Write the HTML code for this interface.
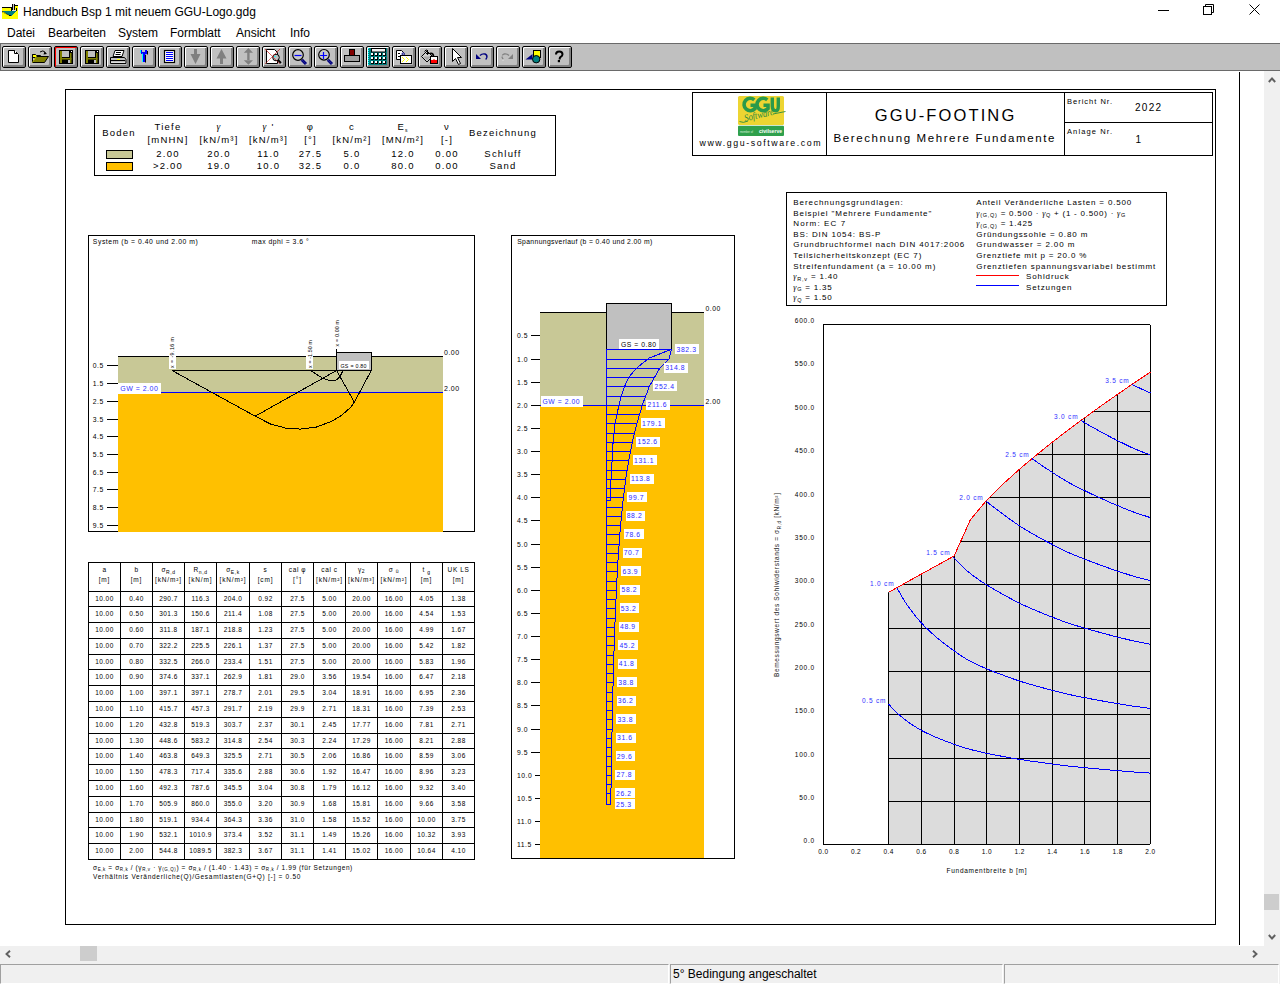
<!DOCTYPE html><html><head><meta charset="utf-8"><style>

*{margin:0;padding:0;box-sizing:border-box}
html,body{width:1280px;height:984px;overflow:hidden;background:#fff;font-family:"Liberation Sans", sans-serif;position:relative}
#title{position:absolute;left:0;top:0;width:1280px;height:22px;background:#fff;font-size:12px;color:#000}
#menu{position:absolute;left:0;top:22px;width:1280px;height:21px;background:#fff;font-size:12px;color:#000}
#menu span{top:4px!important}
#tb{position:absolute;left:0;top:43px;width:1280px;height:28px;background:#c0c0c0;border-top:1px solid #6a6a6a;border-bottom:1px solid #6a6a6a;border-left:1px solid #6a6a6a}
.btn{position:absolute;top:2px;width:24px;height:22px;border:1px solid #000;border-radius:2px;background:#c0c0c0;box-shadow:inset 1px 1px 0 #fff,inset -2px -2px 0 #808080}
.btn.red{box-shadow:inset 1px 1px 0 #ff0000,inset -2px -2px 0 #808080}
.btn svg{position:absolute;left:0;top:0}
#doc{position:absolute;left:0;top:0}
#vs{position:absolute;left:1264px;top:71px;width:16px;height:875px;background:#f0f0f0}
#hs{position:absolute;left:0;top:946px;width:1264px;height:18px;background:#f0f0f0}
#corner{position:absolute;left:1264px;top:946px;width:16px;height:18px;background:#f0f0f0}
#sb{position:absolute;left:0;top:964px;width:1280px;height:20px;background:#f0f0f0}
#sb .p{position:absolute;top:0;height:20px;border-top:1px solid #a0a0a0;border-left:1px solid #a0a0a0;border-right:1px solid #fff;border-bottom:1px solid #fff;font-size:12px;color:#000}
#sb .p span{position:absolute;left:2px;top:2px}

</style></head><body>
<div id="title"><svg style="position:absolute;left:2px;top:4px" width="17" height="16" viewBox="0 0 17 16" shape-rendering="crispEdges"><rect x="0" y="3" width="16" height="12" fill="#ffff00"/><rect x="13" y="1.5" width="3" height="2" fill="#ffff00"/><rect x="0" y="3" width="10" height="1" fill="#000"/><rect x="10" y="0" width="1" height="7" fill="#000"/><rect x="11" y="0" width="1" height="6" fill="#c8c8c8"/><rect x="12" y="0" width="1" height="6" fill="#000"/><rect x="13" y="1" width="3" height="1" fill="#000"/><rect x="9" y="3.5" width="1" height="3" fill="#000"/><rect x="14" y="3.5" width="1" height="3" fill="#000"/><rect x="10" y="5.5" width="4" height="1.5" fill="#e0e0e0"/><path d="M0 7h14.5l-4 4.5h-2.5z" fill="#008080"/><path d="M0 7.5l7.5 4" stroke="#000" stroke-width="0.9" stroke-dasharray="1.2 0.8" shape-rendering="auto"/><rect x="7" y="11" width="2" height="1" fill="#000"/></svg><span style="position:absolute;left:23px;top:5px">Handbuch Bsp 1 mit neuem GGU-Logo.gdg</span><svg style="position:absolute;left:1158px;top:10px" width="11" height="2"><rect width="11" height="1" fill="#000"/></svg><svg style="position:absolute;left:1203px;top:4px" width="12" height="12" viewBox="0 0 12 12"><rect x="0.5" y="2.5" width="8" height="8" fill="none" stroke="#000"/><path d="M2.5 2.5v-2h8v8h-2" fill="none" stroke="#000"/></svg><svg style="position:absolute;left:1249px;top:4px" width="12" height="12" viewBox="0 0 12 12"><path d="M0.5 0.5l10 10M10.5 0.5l-10 10" stroke="#000"/></svg></div>
<div id="menu"><span style="position:absolute;left:7px;top:25px">Datei</span><span style="position:absolute;left:48px;top:25px">Bearbeiten</span><span style="position:absolute;left:118px;top:25px">System</span><span style="position:absolute;left:170px;top:25px">Formblatt</span><span style="position:absolute;left:236px;top:25px">Ansicht</span><span style="position:absolute;left:290px;top:25px">Info</span></div>
<div id="tb"><div class="btn" style="left:1px"><svg width="22" height="20" viewBox="0 0 22 20"><path d="M5.5 3.5h6l4 4v8h-10z" fill="#fff" stroke="#000"/><path d="M11.5 3.5v3h3" fill="none" stroke="#000"/><rect x="12" y="4" width="1" height="1" fill="#fff"/></svg></div><div class="btn" style="left:27px"><svg width="22" height="20" viewBox="0 0 22 20"><path d="M3.5 7.5h3l1 1h4v2h-8z" fill="#ffff00" stroke="#000"/><path d="M3.5 15.5v-8M3.5 15.5h12l4-6h-12l-4 6z" fill="#808000" stroke="#000"/><path d="M3.5 15.5l4-6" stroke="#ffff00" stroke-width="0.8"/><path d="M11 5q3-2.5 5.5 0.5" fill="none" stroke="#000"/><path d="M15.5 4.5l2.5 2.5l-3.5 0.5z" fill="#000"/></svg></div><div class="btn red" style="left:53px"><svg width="22" height="20" viewBox="0 0 22 20"><rect x="4" y="3" width="14" height="14" fill="#000"/><rect x="5" y="4" width="2" height="12" fill="#808000"/><rect x="15" y="6" width="1.5" height="10" fill="#808000"/><rect x="5" y="11" width="11.5" height="1.5" fill="#808000"/><rect x="7" y="4" width="7" height="6" fill="#c0c0c0"/><rect x="13" y="13" width="2" height="3" fill="#c0c0c0"/><rect x="16" y="4" width="1" height="1" fill="#fff"/></svg></div><div class="btn" style="left:79px"><svg width="22" height="20" viewBox="0 0 22 20"><rect x="4" y="3" width="14" height="14" fill="#000"/><rect x="5" y="4" width="2" height="12" fill="#808000"/><rect x="15" y="6" width="1.5" height="10" fill="#808000"/><rect x="5" y="11" width="11.5" height="1.5" fill="#808000"/><rect x="7" y="4" width="7" height="6" fill="#c0c0c0"/><rect x="13" y="13" width="2" height="3" fill="#c0c0c0"/><rect x="16" y="4" width="1" height="1" fill="#fff"/></svg></div><div class="btn" style="left:105px"><svg width="22" height="20" viewBox="0 0 22 20"><path d="M8 3.5h9l-2 6h-9z" fill="#fff" stroke="#000"/><path d="M9 5.5h5M8.5 7.5h5" stroke="#000"/><path d="M3.5 10.5h14l1.5 2v4h-15.5z" fill="#c0c0c0" stroke="#000"/><path d="M4 13.5h14" stroke="#000"/><path d="M10 12.5h3" stroke="#ffff00"/><path d="M4 15.5h14" stroke="#e0e0e0"/></svg></div><div class="btn" style="left:131px"><svg width="22" height="20" viewBox="0 0 22 20"><path d="M7 3h2v2h3v-2h2v4h-1.5v8h-2.5v-8h-2v-1.5h-1z" fill="#0000ff"/><path d="M7.5 3v3M9.5 6.5v8.5" stroke="#00ffff"/><path d="M14.5 4v3.5M12.5 8v7.5" stroke="#000"/></svg></div><div class="btn" style="left:157px"><svg width="22" height="20" viewBox="0 0 22 20"><rect x="5.5" y="3.5" width="10" height="12" fill="#fff" stroke="#000" stroke-width="1.2"/><path d="M7 5.5h7M7 7.5h7M7 9.5h7M7 11.5h7M7 13.5h7" stroke="#0000ff"/></svg></div><div class="btn" style="left:183px"><svg width="22" height="20" viewBox="0 0 22 20"><path d="M9 2h3v5h3.5l-5 10l-5-10h3.5z" fill="#808080"/></svg></div><div class="btn" style="left:209px"><svg width="22" height="20" viewBox="0 0 22 20"><path d="M9 17h3v-5.5h3.5l-5-9.5l-5 9.5h3.5z" fill="#808080"/></svg></div><div class="btn" style="left:235px"><svg width="22" height="20" viewBox="0 0 22 20"><path d="M10.2 5.5h2.4v8h-2.4z M6.8 5.7l4.6-4.6l4.6 4.6z M6.8 13.3l4.6 4.4l4.6-4.4z" fill="#808080"/></svg></div><div class="btn" style="left:261px"><svg width="22" height="20" viewBox="0 0 22 20"><path d="M3.5 2.5h8l3 3v11h-11z" fill="#fff" stroke="#000"/><circle cx="13" cy="10.5" r="3.3" fill="#c0c0c0" stroke="#000"/><path d="M11.5 9l1 1" stroke="#00ffff" stroke-width="1.3"/><path d="M15 13l3 3" stroke="#000" stroke-width="1.8"/><path d="M2 2l15 15M17 2l-15 15" stroke="#c00000" stroke-width="0.9" stroke-dasharray="1 0.5"/></svg></div><div class="btn" style="left:287px"><svg width="22" height="20" viewBox="0 0 22 20"><circle cx="9" cy="8" r="5.3" fill="#c8c8c8" stroke="#000" stroke-width="1.2"/><path d="M5.5 8.5h7" stroke="#0000ff" stroke-width="1.2"/><path d="M12.8 12.8l4.2 4.2" stroke="#000080" stroke-width="3"/><path d="M13.5 13.5l3 3" stroke="#8080c0" stroke-width="0.6" stroke-dasharray="0.8 0.8"/></svg></div><div class="btn" style="left:313px"><svg width="22" height="20" viewBox="0 0 22 20"><circle cx="9" cy="7.8" r="5.3" fill="#c8c8c8" stroke="#000" stroke-width="1.2"/><path d="M5.1 8.5h7M8.5 4.9v7" stroke="#0000ff" stroke-width="1.2"/><path d="M12.8 12.8l4.2 4.2" stroke="#000080" stroke-width="3"/><path d="M13.5 13.5l3 3" stroke="#8080c0" stroke-width="0.6" stroke-dasharray="0.8 0.8"/></svg></div><div class="btn" style="left:339px"><svg width="22" height="20" viewBox="0 0 22 20"><rect x="8.5" y="2.5" width="5" height="6" fill="#800000" stroke="#000"/><rect x="3.5" y="8.5" width="15" height="6" fill="#a0a0a0" stroke="#000"/></svg></div><div class="btn" style="left:365px"><svg width="22" height="20" viewBox="0 0 22 20"><rect x="1" y="1" width="19" height="17" fill="#008080"/><rect x="4.5" y="1.5" width="14" height="3.5" fill="#f0f0f0" stroke="#000"/><path d="M1.5 1v17" stroke="#00ffff" stroke-dasharray="1 1"/><rect x="4" y="6" width="3" height="3" fill="#000"/><rect x="4" y="6" width="2" height="2" fill="#fff"/><rect x="4" y="10" width="3" height="3" fill="#000"/><rect x="4" y="10" width="2" height="2" fill="#fff"/><rect x="4" y="14" width="3" height="3" fill="#000"/><rect x="4" y="14" width="2" height="2" fill="#fff"/><rect x="8" y="6" width="3" height="3" fill="#000"/><rect x="8" y="6" width="2" height="2" fill="#fff"/><rect x="8" y="10" width="3" height="3" fill="#000"/><rect x="8" y="10" width="2" height="2" fill="#fff"/><rect x="8" y="14" width="3" height="3" fill="#000"/><rect x="8" y="14" width="2" height="2" fill="#fff"/><rect x="12" y="6" width="3" height="3" fill="#000"/><rect x="12" y="6" width="2" height="2" fill="#fff"/><rect x="12" y="10" width="3" height="3" fill="#000"/><rect x="12" y="10" width="2" height="2" fill="#fff"/><rect x="12" y="14" width="3" height="3" fill="#000"/><rect x="12" y="14" width="2" height="2" fill="#fff"/><rect x="16" y="6" width="3" height="3" fill="#000"/><rect x="16" y="6" width="2" height="2" fill="#fff"/><rect x="16" y="10" width="3" height="3" fill="#000"/><rect x="16" y="10" width="2" height="2" fill="#fff"/><rect x="16" y="14" width="3" height="3" fill="#000"/><rect x="16" y="14" width="2" height="2" fill="#fff"/></svg></div><div class="btn" style="left:391px"><svg width="22" height="20" viewBox="0 0 22 20"><path d="M3.5 3.5h5l2 2v7h-7z" fill="#fff" stroke="#000"/><path d="M5 6.5h2M5 9.5h2" stroke="#000"/><circle cx="10.2" cy="7" r="1.2" fill="#fff" stroke="#000080"/><rect x="7.5" y="8.5" width="11" height="8" fill="#fff" stroke="#000"/><path d="M9 10l2.5 2.5l-2.5 2.5M13 10l2.5 2.5l-2.5 2.5" stroke="#ffff00" fill="none"/></svg></div><div class="btn" style="left:417px"><svg width="22" height="20" viewBox="0 0 22 20"><path d="M2.5 9.5l5.5-5.5l5.5 5.5l-5.5 5.5z" fill="#d0d0d0" stroke="#000"/><path d="M4 9.5l4 4l4-4z" fill="#a8a8a8"/><path d="M5.5 4.5q1.5-3 3.5-0.5" fill="none" stroke="#000"/><path d="M8.5 3v4.5M7 6l1.5 1.5l1.5-1.5" stroke="#000" fill="none"/><path d="M11 6.5q3.5-1 3.5 3.5v4" stroke="#000" stroke-width="1.8" fill="none"/><rect x="11.5" y="9.5" width="7" height="7" fill="#fff" stroke="#000"/><path d="M12 13h2l1-1l1 1h2v3h-6z" fill="#ff0000"/></svg></div><div class="btn" style="left:443px"><svg width="22" height="20" viewBox="0 0 22 20"><path d="M7.5 1.5v13l3-3l3 6l2-1l-3-6h4z" fill="#fff" stroke="#000"/></svg></div><div class="btn" style="left:469px"><svg width="22" height="20" viewBox="0 0 22 20"><path d="M9 8.5q2-2 5-1.5q2.5 1 1.8 3.5l-1 2" fill="none" stroke="#000080" stroke-width="1.4"/><path d="M5 7v5h5z" fill="#000080"/></svg></div><div class="btn" style="left:495px"><svg width="22" height="20" viewBox="0 0 22 20"><path d="M12 8.5q-2-2-5-1.5q-2.5 1-1.8 3.5l1 2" fill="none" stroke="#808080" stroke-width="1.3"/><path d="M16 7v5h-5z" fill="#808080"/><path d="M5 8.5v1M6 12.5v1" stroke="#fff"/></svg></div><div class="btn" style="left:521px"><svg width="22" height="20" viewBox="0 0 22 20"><rect x="10.5" y="3.5" width="7" height="7" fill="#ffff00" stroke="#000"/><path d="M2.5 12.5l7-5.5v5.5z" fill="#000080"/><circle cx="13.2" cy="12.2" r="3.7" fill="#008080" stroke="#000"/></svg></div><div class="btn" style="left:547px"><svg width="22" height="20" viewBox="0 0 22 20"><path d="M7 7.5q0-3 3.2-3q3.3 0 3.3 2.8q0 1.6-1.8 2.5q-1 0.6-1 1.8v0.8" fill="none" stroke="#000" stroke-width="2"/><rect x="8.8" y="13" width="2.2" height="2.2" fill="#000"/></svg></div></div>
<div id="vs"><svg style="position:absolute;left:4px;top:6px" width="8" height="6" viewBox="0 0 8 6"><path d="M0.8 5l3.2-3.5l3.2 3.5" stroke="#606060" stroke-width="1.9" fill="none"/></svg><div style="position:absolute;left:0;top:823px;width:15px;height:16px;background:#cdcdcd"></div><svg style="position:absolute;left:4px;top:863px" width="8" height="6" viewBox="0 0 8 6"><path d="M0.8 1l3.2 3.5l3.2-3.5" stroke="#606060" stroke-width="1.9" fill="none"/></svg></div>
<div id="hs"><svg style="position:absolute;left:5px;top:4px" width="6" height="8" viewBox="0 0 6 8"><path d="M5 0.8l-3.5 3.2l3.5 3.2" stroke="#606060" stroke-width="1.9" fill="none"/></svg><div style="position:absolute;left:80px;top:0;width:17px;height:15px;background:#cdcdcd"></div><svg style="position:absolute;left:1252px;top:4px" width="6" height="8" viewBox="0 0 6 8"><path d="M1 0.8l3.5 3.2l-3.5 3.2" stroke="#606060" stroke-width="1.9" fill="none"/></svg></div>
<div id="corner"></div>
<div id="sb"><div class="p" style="left:0;width:669px"></div><div class="p" style="left:670px;width:333px"><span>5° Bedingung angeschaltet</span></div><div class="p" style="left:1004px;width:275px"></div></div>
<svg id="doc" width="1280" height="984" viewBox="0 0 1280 984" shape-rendering="crispEdges" style="position:absolute;left:0;top:0;font-family:&quot;Liberation Sans&quot;, sans-serif">
<rect x="65.5" y="89.5" width="1150" height="835" fill="none" stroke="#000" stroke-width="1" />
<line x1="1239.5" y1="72" x2="1239.5" y2="945" stroke="#000" stroke-width="1"/>
<rect x="94.5" y="115.5" width="461" height="60" fill="none" stroke="#000" stroke-width="1" />
<text x="119" y="136" font-size="9.5" fill="#000" text-anchor="middle" letter-spacing="1.2">Boden</text>
<text x="168" y="130" font-size="9.5" fill="#000" text-anchor="middle" letter-spacing="1.2">Tiefe</text>
<text x="168" y="143" font-size="9.5" fill="#000" text-anchor="middle" letter-spacing="1.2">[mNHN]</text>
<text x="168" y="156.5" font-size="9.5" fill="#000" text-anchor="middle" letter-spacing="1.2">2.00</text>
<text x="168" y="168.5" font-size="9.5" fill="#000" text-anchor="middle" letter-spacing="1.2">&gt;2.00</text>
<text x="219" y="130" font-size="9.5" fill="#000" text-anchor="middle" letter-spacing="1.2"><tspan font-family="Liberation Serif" font-style="italic">γ</tspan></text>
<text x="219" y="143" font-size="9.5" fill="#000" text-anchor="middle" letter-spacing="1.2">[kN/m³]</text>
<text x="219" y="156.5" font-size="9.5" fill="#000" text-anchor="middle" letter-spacing="1.2">20.0</text>
<text x="219" y="168.5" font-size="9.5" fill="#000" text-anchor="middle" letter-spacing="1.2">19.0</text>
<text x="268.5" y="130" font-size="9.5" fill="#000" text-anchor="middle" letter-spacing="1.2"><tspan font-family="Liberation Serif" font-style="italic">γ</tspan> '</text>
<text x="268.5" y="143" font-size="9.5" fill="#000" text-anchor="middle" letter-spacing="1.2">[kN/m³]</text>
<text x="268.5" y="156.5" font-size="9.5" fill="#000" text-anchor="middle" letter-spacing="1.2">11.0</text>
<text x="268.5" y="168.5" font-size="9.5" fill="#000" text-anchor="middle" letter-spacing="1.2">10.0</text>
<text x="310.5" y="130" font-size="9.5" fill="#000" text-anchor="middle" letter-spacing="1.2">φ</text>
<text x="310.5" y="143" font-size="9.5" fill="#000" text-anchor="middle" letter-spacing="1.2">[°]</text>
<text x="310.5" y="156.5" font-size="9.5" fill="#000" text-anchor="middle" letter-spacing="1.2">27.5</text>
<text x="310.5" y="168.5" font-size="9.5" fill="#000" text-anchor="middle" letter-spacing="1.2">32.5</text>
<text x="352" y="130" font-size="9.5" fill="#000" text-anchor="middle" letter-spacing="1.2">c</text>
<text x="352" y="143" font-size="9.5" fill="#000" text-anchor="middle" letter-spacing="1.2">[kN/m²]</text>
<text x="352" y="156.5" font-size="9.5" fill="#000" text-anchor="middle" letter-spacing="1.2">5.0</text>
<text x="352" y="168.5" font-size="9.5" fill="#000" text-anchor="middle" letter-spacing="1.2">0.0</text>
<text x="403" y="130" font-size="9.5" fill="#000" text-anchor="middle" letter-spacing="1.2">E<tspan font-size="5" dy="1.5">s</tspan></text>
<text x="403" y="143" font-size="9.5" fill="#000" text-anchor="middle" letter-spacing="1.2">[MN/m²]</text>
<text x="403" y="156.5" font-size="9.5" fill="#000" text-anchor="middle" letter-spacing="1.2">12.0</text>
<text x="403" y="168.5" font-size="9.5" fill="#000" text-anchor="middle" letter-spacing="1.2">80.0</text>
<text x="447" y="130" font-size="9.5" fill="#000" text-anchor="middle" letter-spacing="1.2">ν</text>
<text x="447" y="143" font-size="9.5" fill="#000" text-anchor="middle" letter-spacing="1.2">[-]</text>
<text x="447" y="156.5" font-size="9.5" fill="#000" text-anchor="middle" letter-spacing="1.2">0.00</text>
<text x="447" y="168.5" font-size="9.5" fill="#000" text-anchor="middle" letter-spacing="1.2">0.00</text>
<text x="503" y="136" font-size="9.5" fill="#000" text-anchor="middle" letter-spacing="1.2">Bezeichnung</text>
<text x="503" y="156.5" font-size="9.5" fill="#000" text-anchor="middle" letter-spacing="1.2">Schluff</text>
<text x="503" y="168.5" font-size="9.5" fill="#000" text-anchor="middle" letter-spacing="1.2">Sand</text>
<rect x="106.5" y="150.5" width="26" height="8" fill="#C8C896" stroke="#000" stroke-width="1" />
<rect x="106.5" y="162.5" width="26" height="8" fill="#FFC000" stroke="#000" stroke-width="1" />
<rect x="692.5" y="92.5" width="520" height="63" fill="none" stroke="#000" stroke-width="1" />
<line x1="826.5" y1="92.5" x2="826.5" y2="155.5" stroke="#000" stroke-width="1"/>
<line x1="1064.5" y1="92.5" x2="1064.5" y2="155.5" stroke="#000" stroke-width="1"/>
<line x1="1064.5" y1="122.5" x2="1212.5" y2="122.5" stroke="#000" stroke-width="1"/>
<text x="944.5" y="120.7" font-size="16.5" fill="#000" text-anchor="middle" textLength="139.5" lengthAdjust="spacing">GGU-FOOTING</text>
<text x="944" y="141.8" font-size="11.5" fill="#000" text-anchor="middle" textLength="221" lengthAdjust="spacing">Berechnung Mehrere Fundamente</text>
<text x="1067" y="104" font-size="7.5" fill="#000" textLength="45" lengthAdjust="spacing">Bericht Nr.</text>
<text x="1135" y="111.2" font-size="10" fill="#000" textLength="26" lengthAdjust="spacing">2022</text>
<text x="1067" y="134" font-size="7.5" fill="#000" textLength="45" lengthAdjust="spacing">Anlage Nr.</text>
<text x="1135.5" y="143" font-size="10" fill="#000">1</text>
<text x="760" y="146" font-size="8.8" fill="#000" text-anchor="middle" textLength="121" lengthAdjust="spacing">www.ggu-software.com</text>
<g shape-rendering="auto">
<rect x="738" y="96" width="46" height="29" rx="1.5" fill="#EDD532"/>
<rect x="738" y="125.7" width="46" height="10.3" rx="1" fill="#2FA04C"/>
<path d="M754.3 99.8 A6.2 6.2 0 1 0 755 108.5 L755 105.2 L750.5 105.2" fill="none" stroke="#2A9A4A" stroke-width="3.6"/>
<path d="M767.3 99.8 A6.2 6.2 0 1 0 768 108.5 L768 105.2 L763.5 105.2" fill="none" stroke="#2A9A4A" stroke-width="3.6"/>
<path d="M772.3 97.5 V106 Q772.3 110.8 776 110.8 Q778.3 110.8 778.3 106 V97.5" fill="none" stroke="#2A9A4A" stroke-width="3.4"/>
<text transform="translate(745,121.5) rotate(-13)" font-family="Liberation Serif" font-style="italic" font-size="10" fill="#2A8A40" textLength="30" lengthAdjust="spacingAndGlyphs">Software</text>
<path d="M739.5 121.5 Q743 123.5 748 121" fill="none" stroke="#2A8A40" stroke-width="0.9"/>
<path d="M773 114 L785.5 111.5" fill="none" stroke="#2A8A40" stroke-width="0.9"/>
<text x="740" y="132.5" font-size="4.2" fill="#d8f0d8" textLength="13" lengthAdjust="spacingAndGlyphs">member of</text>
<text x="759" y="132.8" font-size="5.2" font-weight="bold" fill="#fff" textLength="23" lengthAdjust="spacingAndGlyphs">civilserve</text>
</g>
<rect x="786.5" y="192.5" width="380" height="113" fill="none" stroke="#000" stroke-width="1" />
<text x="793.3" y="205" font-size="8" fill="#000" textLength="109.4" lengthAdjust="spacing">Berechnungsgrundlagen:</text>
<text x="793.3" y="215.8" font-size="8" fill="#000" textLength="138" lengthAdjust="spacing">Beispiel "Mehrere Fundamente"</text>
<text x="793.3" y="226.2" font-size="8" fill="#000" textLength="52" lengthAdjust="spacing">Norm:  EC 7</text>
<text x="793.3" y="236.8" font-size="8" fill="#000" textLength="87" lengthAdjust="spacing">BS: DIN 1054: BS-P</text>
<text x="793.3" y="247.3" font-size="8" fill="#000" textLength="171" lengthAdjust="spacing">Grundbruchformel nach DIN 4017:2006</text>
<text x="793.3" y="257.9" font-size="8" fill="#000" textLength="128" lengthAdjust="spacing">Teilsicherheitskonzept (EC 7)</text>
<text x="793.3" y="268.5" font-size="8" fill="#000" textLength="142" lengthAdjust="spacing">Streifenfundament (a = 10.00 m)</text>
<text x="793.3" y="279" font-size="8" fill="#000" letter-spacing="0.8"><tspan font-family="Liberation Serif" font-style="italic">γ</tspan><tspan font-size="5.5" dy="1.5">R,v</tspan><tspan dy="-1.5"> = 1.40</tspan></text>
<text x="793.3" y="289.6" font-size="8" fill="#000" letter-spacing="0.8"><tspan font-family="Liberation Serif" font-style="italic">γ</tspan><tspan font-size="5.5" dy="1.5">G</tspan><tspan dy="-1.5"> = 1.35</tspan></text>
<text x="793.3" y="300.1" font-size="8" fill="#000" letter-spacing="0.8"><tspan font-family="Liberation Serif" font-style="italic">γ</tspan><tspan font-size="5.5" dy="1.5">Q</tspan><tspan dy="-1.5"> = 1.50</tspan></text>
<text x="976.3" y="205" font-size="8" fill="#000" textLength="155" lengthAdjust="spacing">Anteil Veränderliche Lasten = 0.500</text>
<text x="976.3" y="236.8" font-size="8" fill="#000" textLength="111" lengthAdjust="spacing">Gründungssohle = 0.80 m</text>
<text x="976.3" y="247.3" font-size="8" fill="#000" textLength="98" lengthAdjust="spacing">Grundwasser = 2.00 m</text>
<text x="976.3" y="257.9" font-size="8" fill="#000" textLength="110" lengthAdjust="spacing">Grenztiefe mit p = 20.0 %</text>
<text x="976.3" y="268.5" font-size="8" fill="#000" textLength="179" lengthAdjust="spacing">Grenztiefen spannungsvariabel bestimmt</text>
<text x="976.3" y="215.8" font-size="8" fill="#000" letter-spacing="0.75"><tspan font-family="Liberation Serif" font-style="italic">γ</tspan><tspan font-size="5.5" dy="1.5">(G,Q)</tspan><tspan dy="-1.5"> = 0.500 · </tspan><tspan font-family="Liberation Serif" font-style="italic">γ</tspan><tspan font-size="5.5" dy="1.5">Q</tspan><tspan dy="-1.5"> + (1 - 0.500) · </tspan><tspan font-family="Liberation Serif" font-style="italic">γ</tspan><tspan font-size="5.5" dy="1.5">G</tspan></text>
<text x="976.3" y="226.2" font-size="8" fill="#000" letter-spacing="0.75"><tspan font-family="Liberation Serif" font-style="italic">γ</tspan><tspan font-size="5.5" dy="1.5">(G,Q)</tspan><tspan dy="-1.5"> = 1.425</tspan></text>
<line x1="976" y1="275.5" x2="1019" y2="275.5" stroke="#FF0000" stroke-width="1"/>
<line x1="976" y1="285.5" x2="1019" y2="285.5" stroke="#0000FF" stroke-width="1"/>
<text x="1026" y="279" font-size="8" fill="#000" letter-spacing="0.9">Sohldruck</text>
<text x="1026" y="289.6" font-size="8" fill="#000" letter-spacing="0.9">Setzungen</text>
<rect x="88.5" y="235.5" width="386" height="296" fill="none" stroke="#000" stroke-width="1" />
<rect x="118" y="356.5" width="325" height="36" fill="#C8C896"/>
<rect x="118" y="392.5" width="325" height="139" fill="#FFC000"/>
<line x1="118" y1="356.5" x2="443" y2="356.5" stroke="#000" stroke-width="1"/>
<line x1="118" y1="392.5" x2="443" y2="392.5" stroke="#0000FF" stroke-width="1"/>
<text x="92.8" y="243.9" font-size="6.8" fill="#000" textLength="105" lengthAdjust="spacing">System (b = 0.40 und 2.00 m)</text>
<text x="251.7" y="243.9" font-size="6.8" fill="#000" textLength="57" lengthAdjust="spacing">max dphi = 3.6 °</text>
<text x="444" y="354.5" font-size="7" fill="#000" letter-spacing="0.5">0.00</text>
<text x="444" y="390.5" font-size="7" fill="#000" letter-spacing="0.5">2.00</text>
<line x1="107" y1="365.5" x2="117.5" y2="365.5" stroke="#000" stroke-width="1"/>
<text x="92.8" y="367.8" font-size="6.8" fill="#000" letter-spacing="0.5">0.5</text>
<line x1="107" y1="383.5" x2="117.5" y2="383.5" stroke="#000" stroke-width="1"/>
<text x="92.8" y="385.8" font-size="6.8" fill="#000" letter-spacing="0.5">1.5</text>
<line x1="107" y1="401.5" x2="117.5" y2="401.5" stroke="#000" stroke-width="1"/>
<text x="92.8" y="403.8" font-size="6.8" fill="#000" letter-spacing="0.5">2.5</text>
<line x1="107" y1="419.5" x2="117.5" y2="419.5" stroke="#000" stroke-width="1"/>
<text x="92.8" y="421.8" font-size="6.8" fill="#000" letter-spacing="0.5">3.5</text>
<line x1="107" y1="436.5" x2="117.5" y2="436.5" stroke="#000" stroke-width="1"/>
<text x="92.8" y="438.8" font-size="6.8" fill="#000" letter-spacing="0.5">4.5</text>
<line x1="107" y1="454.5" x2="117.5" y2="454.5" stroke="#000" stroke-width="1"/>
<text x="92.8" y="456.8" font-size="6.8" fill="#000" letter-spacing="0.5">5.5</text>
<line x1="107" y1="472.5" x2="117.5" y2="472.5" stroke="#000" stroke-width="1"/>
<text x="92.8" y="474.8" font-size="6.8" fill="#000" letter-spacing="0.5">6.5</text>
<line x1="107" y1="489.5" x2="117.5" y2="489.5" stroke="#000" stroke-width="1"/>
<text x="92.8" y="491.8" font-size="6.8" fill="#000" letter-spacing="0.5">7.5</text>
<line x1="107" y1="507.5" x2="117.5" y2="507.5" stroke="#000" stroke-width="1"/>
<text x="92.8" y="509.8" font-size="6.8" fill="#000" letter-spacing="0.5">8.5</text>
<line x1="107" y1="525.5" x2="117.5" y2="525.5" stroke="#000" stroke-width="1"/>
<text x="92.8" y="527.8" font-size="6.8" fill="#000" letter-spacing="0.5">9.5</text>
<rect x="118" y="383" width="43" height="10.5" fill="#fff"/>
<text x="120.3" y="391" font-size="7" fill="#3030ff" textLength="37.5" lengthAdjust="spacing">GW = 2.00</text>
<rect x="336.5" y="352.5" width="35" height="18" fill="#C0C0C0" stroke="#000" stroke-width="1"/>
<rect x="339" y="361" width="30" height="8" fill="#fff"/>
<text x="340.5" y="367.8" font-size="5.3" fill="#000" textLength="26" lengthAdjust="spacing">GS = 0.80</text>
<line x1="336.5" y1="349" x2="336.5" y2="352.5" stroke="#000" stroke-width="1"/>
<line x1="172" y1="370.5" x2="336.5" y2="370.5" stroke="#000" stroke-width="1"/>
<rect x="168.8" y="336" width="7.2" height="33" fill="#fff"/>
<text transform="translate(174.4,368) rotate(-90)" font-size="5.3" fill="#000" textLength="31" lengthAdjust="spacing">x = -9.16 m</text>
<rect x="306.0" y="339" width="7.2" height="30" fill="#fff"/>
<text transform="translate(311.6,368) rotate(-90)" font-size="5.3" fill="#000" textLength="28" lengthAdjust="spacing">x = -1.50 m</text>
<text transform="translate(338.6,346.5) rotate(-90)" font-size="5.3" fill="#000" textLength="26.5" lengthAdjust="spacing">x = 0.00 m</text>
<polyline points="172.0,370.5 255.2,416.2" fill="none" stroke="#000" stroke-width="1"/>
<polyline points="255.2,416.2 336.6,370.5" fill="none" stroke="#000" stroke-width="1"/>
<polyline points="255.2,416.2 270.5,424.0 285.7,428.1 299.9,429.1 316.2,427.1 331.4,421.5 341.6,415.4 350.7,407.3 354.3,402.2" fill="none" stroke="#000" stroke-width="1"/>
<polyline points="336.6,370.5 354.3,402.2 371.3,370.5" fill="none" stroke="#000" stroke-width="1"/>
<polyline points="310.7,370.5 322.8,378.4 329.9,380.6 335.6,380.6 339.8,377.0 343.0,370.5" fill="none" stroke="#000" stroke-width="1"/>
<rect x="511.5" y="235.5" width="223" height="623" fill="none" stroke="#000" stroke-width="1" />
<rect x="540" y="312" width="164" height="93" fill="#C8C896"/>
<rect x="540" y="405" width="164" height="453" fill="#FFC000"/>
<line x1="540" y1="312.5" x2="606.5" y2="312.5" stroke="#000" stroke-width="1"/>
<line x1="671.5" y1="312.5" x2="704" y2="312.5" stroke="#000" stroke-width="1"/>
<text x="517.2" y="244" font-size="6.8" fill="#000" textLength="135" lengthAdjust="spacing">Spannungsverlauf (b = 0.40 und 2.00 m)</text>
<text x="705.6" y="310.8" font-size="6.8" fill="#000" letter-spacing="0.5">0.00</text>
<text x="705.6" y="404" font-size="6.8" fill="#000" letter-spacing="0.5">2.00</text>
<line x1="530.5" y1="335.5" x2="540" y2="335.5" stroke="#000" stroke-width="1"/>
<text x="517" y="338.0" font-size="6.8" fill="#000" letter-spacing="0.5">0.5</text>
<line x1="530.5" y1="359.5" x2="540" y2="359.5" stroke="#000" stroke-width="1"/>
<text x="517" y="362.0" font-size="6.8" fill="#000" letter-spacing="0.5">1.0</text>
<line x1="530.5" y1="382.5" x2="540" y2="382.5" stroke="#000" stroke-width="1"/>
<text x="517" y="385.0" font-size="6.8" fill="#000" letter-spacing="0.5">1.5</text>
<line x1="530.5" y1="405.5" x2="540" y2="405.5" stroke="#000" stroke-width="1"/>
<text x="517" y="408.0" font-size="6.8" fill="#000" letter-spacing="0.5">2.0</text>
<line x1="530.5" y1="428.5" x2="540" y2="428.5" stroke="#000" stroke-width="1"/>
<text x="517" y="431.0" font-size="6.8" fill="#000" letter-spacing="0.5">2.5</text>
<line x1="530.5" y1="451.5" x2="540" y2="451.5" stroke="#000" stroke-width="1"/>
<text x="517" y="454.0" font-size="6.8" fill="#000" letter-spacing="0.5">3.0</text>
<line x1="530.5" y1="474.5" x2="540" y2="474.5" stroke="#000" stroke-width="1"/>
<text x="517" y="477.0" font-size="6.8" fill="#000" letter-spacing="0.5">3.5</text>
<line x1="530.5" y1="497.5" x2="540" y2="497.5" stroke="#000" stroke-width="1"/>
<text x="517" y="500.0" font-size="6.8" fill="#000" letter-spacing="0.5">4.0</text>
<line x1="530.5" y1="520.5" x2="540" y2="520.5" stroke="#000" stroke-width="1"/>
<text x="517" y="523.0" font-size="6.8" fill="#000" letter-spacing="0.5">4.5</text>
<line x1="530.5" y1="544.5" x2="540" y2="544.5" stroke="#000" stroke-width="1"/>
<text x="517" y="547.0" font-size="6.8" fill="#000" letter-spacing="0.5">5.0</text>
<line x1="530.5" y1="567.5" x2="540" y2="567.5" stroke="#000" stroke-width="1"/>
<text x="517" y="570.0" font-size="6.8" fill="#000" letter-spacing="0.5">5.5</text>
<line x1="530.5" y1="590.5" x2="540" y2="590.5" stroke="#000" stroke-width="1"/>
<text x="517" y="593.0" font-size="6.8" fill="#000" letter-spacing="0.5">6.0</text>
<line x1="530.5" y1="613.5" x2="540" y2="613.5" stroke="#000" stroke-width="1"/>
<text x="517" y="616.0" font-size="6.8" fill="#000" letter-spacing="0.5">6.5</text>
<line x1="530.5" y1="636.5" x2="540" y2="636.5" stroke="#000" stroke-width="1"/>
<text x="517" y="639.0" font-size="6.8" fill="#000" letter-spacing="0.5">7.0</text>
<line x1="530.5" y1="659.5" x2="540" y2="659.5" stroke="#000" stroke-width="1"/>
<text x="517" y="662.0" font-size="6.8" fill="#000" letter-spacing="0.5">7.5</text>
<line x1="530.5" y1="682.5" x2="540" y2="682.5" stroke="#000" stroke-width="1"/>
<text x="517" y="685.0" font-size="6.8" fill="#000" letter-spacing="0.5">8.0</text>
<line x1="530.5" y1="705.5" x2="540" y2="705.5" stroke="#000" stroke-width="1"/>
<text x="517" y="708.0" font-size="6.8" fill="#000" letter-spacing="0.5">8.5</text>
<line x1="530.5" y1="729.5" x2="540" y2="729.5" stroke="#000" stroke-width="1"/>
<text x="517" y="732.0" font-size="6.8" fill="#000" letter-spacing="0.5">9.0</text>
<line x1="530.5" y1="752.5" x2="540" y2="752.5" stroke="#000" stroke-width="1"/>
<text x="517" y="755.0" font-size="6.8" fill="#000" letter-spacing="0.5">9.5</text>
<line x1="535" y1="775.5" x2="540" y2="775.5" stroke="#000" stroke-width="1"/>
<text x="517" y="778.0" font-size="6.8" fill="#000" letter-spacing="0.5">10.0</text>
<line x1="535" y1="798.5" x2="540" y2="798.5" stroke="#000" stroke-width="1"/>
<text x="517" y="801.0" font-size="6.8" fill="#000" letter-spacing="0.5">10.5</text>
<line x1="535" y1="821.5" x2="540" y2="821.5" stroke="#000" stroke-width="1"/>
<text x="517" y="824.0" font-size="6.8" fill="#000" letter-spacing="0.5">11.0</text>
<line x1="535" y1="844.5" x2="540" y2="844.5" stroke="#000" stroke-width="1"/>
<text x="517" y="847.0" font-size="6.8" fill="#000" letter-spacing="0.5">11.5</text>
<rect x="606.5" y="303.5" width="65" height="45.5" fill="#C0C0C0" stroke="#000" stroke-width="1"/>
<rect x="619" y="338.7" width="40" height="10" fill="#fff"/>
<text x="621" y="346.8" font-size="6.8" fill="#000" textLength="35" lengthAdjust="spacing">GS = 0.80</text>
<line x1="540" y1="405.5" x2="704" y2="405.5" stroke="#0000FF" stroke-width="1"/>
<rect x="540.5" y="396" width="42" height="10.5" fill="#fff"/>
<text x="542.5" y="403.5" font-size="6.8" fill="#3030ff" textLength="37" lengthAdjust="spacing">GW = 2.00</text>
<line x1="606.5" y1="349.5" x2="671.41454" y2="349.5" stroke="#0000FF" stroke-width="1"/>
<line x1="606.5" y1="359.5" x2="669.1562" y2="359.5" stroke="#0000FF" stroke-width="1"/>
<line x1="606.5" y1="368.5" x2="659.95304" y2="368.5" stroke="#0000FF" stroke-width="1"/>
<line x1="606.5" y1="377.5" x2="654.65528" y2="377.5" stroke="#0000FF" stroke-width="1"/>
<line x1="606.5" y1="386.5" x2="649.35752" y2="386.5" stroke="#0000FF" stroke-width="1"/>
<line x1="606.5" y1="396.5" x2="645.8936" y2="396.5" stroke="#0000FF" stroke-width="1"/>
<line x1="606.5" y1="405.5" x2="642.42968" y2="405.5" stroke="#0000FF" stroke-width="1"/>
<line x1="606.5" y1="414.5" x2="639.67043" y2="414.5" stroke="#0000FF" stroke-width="1"/>
<line x1="606.5" y1="423.5" x2="636.9111800000001" y2="423.5" stroke="#0000FF" stroke-width="1"/>
<line x1="606.5" y1="433.5" x2="634.66133" y2="433.5" stroke="#0000FF" stroke-width="1"/>
<line x1="606.5" y1="442.5" x2="632.41148" y2="442.5" stroke="#0000FF" stroke-width="1"/>
<line x1="606.5" y1="451.5" x2="630.58613" y2="451.5" stroke="#0000FF" stroke-width="1"/>
<line x1="606.5" y1="460.5" x2="628.76078" y2="460.5" stroke="#0000FF" stroke-width="1"/>
<line x1="606.5" y1="470.5" x2="627.29201" y2="470.5" stroke="#0000FF" stroke-width="1"/>
<line x1="606.5" y1="479.5" x2="625.82324" y2="479.5" stroke="#0000FF" stroke-width="1"/>
<line x1="606.5" y1="488.5" x2="624.62615" y2="488.5" stroke="#0000FF" stroke-width="1"/>
<line x1="606.5" y1="497.5" x2="623.42906" y2="497.5" stroke="#0000FF" stroke-width="1"/>
<line x1="606.5" y1="507.5" x2="622.45271" y2="507.5" stroke="#0000FF" stroke-width="1"/>
<line x1="606.5" y1="516.5" x2="621.47636" y2="516.5" stroke="#0000FF" stroke-width="1"/>
<line x1="606.5" y1="525.5" x2="620.66132" y2="525.5" stroke="#0000FF" stroke-width="1"/>
<line x1="606.5" y1="534.5" x2="619.84628" y2="534.5" stroke="#0000FF" stroke-width="1"/>
<line x1="606.5" y1="544.5" x2="619.17557" y2="544.5" stroke="#0000FF" stroke-width="1"/>
<line x1="606.5" y1="553.5" x2="618.50486" y2="553.5" stroke="#0000FF" stroke-width="1"/>
<line x1="606.5" y1="562.5" x2="617.92754" y2="562.5" stroke="#0000FF" stroke-width="1"/>
<line x1="606.5" y1="571.5" x2="617.35022" y2="571.5" stroke="#0000FF" stroke-width="1"/>
<line x1="606.5" y1="581.5" x2="616.86629" y2="581.5" stroke="#0000FF" stroke-width="1"/>
<line x1="606.5" y1="590.5" x2="616.38236" y2="590.5" stroke="#0000FF" stroke-width="1"/>
<line x1="606.5" y1="599.5" x2="615.95786" y2="599.5" stroke="#0000FF" stroke-width="1"/>
<line x1="606.5" y1="608.5" x2="615.53336" y2="608.5" stroke="#0000FF" stroke-width="1"/>
<line x1="606.5" y1="618.5" x2="615.16829" y2="618.5" stroke="#0000FF" stroke-width="1"/>
<line x1="606.5" y1="627.5" x2="614.80322" y2="627.5" stroke="#0000FF" stroke-width="1"/>
<line x1="606.5" y1="636.5" x2="614.48909" y2="636.5" stroke="#0000FF" stroke-width="1"/>
<line x1="606.5" y1="645.5" x2="614.17496" y2="645.5" stroke="#0000FF" stroke-width="1"/>
<line x1="606.5" y1="655.5" x2="613.8863" y2="655.5" stroke="#0000FF" stroke-width="1"/>
<line x1="606.5" y1="664.5" x2="613.59764" y2="664.5" stroke="#0000FF" stroke-width="1"/>
<line x1="606.5" y1="673.5" x2="613.34294" y2="673.5" stroke="#0000FF" stroke-width="1"/>
<line x1="606.5" y1="682.5" x2="613.08824" y2="682.5" stroke="#0000FF" stroke-width="1"/>
<line x1="606.5" y1="692.5" x2="612.8675" y2="692.5" stroke="#0000FF" stroke-width="1"/>
<line x1="606.5" y1="701.5" x2="612.64676" y2="701.5" stroke="#0000FF" stroke-width="1"/>
<line x1="606.5" y1="710.5" x2="612.443" y2="710.5" stroke="#0000FF" stroke-width="1"/>
<line x1="606.5" y1="719.5" x2="612.23924" y2="719.5" stroke="#0000FF" stroke-width="1"/>
<line x1="606.5" y1="729.5" x2="612.05246" y2="729.5" stroke="#0000FF" stroke-width="1"/>
<line x1="606.5" y1="738.5" x2="611.86568" y2="738.5" stroke="#0000FF" stroke-width="1"/>
<line x1="606.5" y1="747.5" x2="611.69588" y2="747.5" stroke="#0000FF" stroke-width="1"/>
<line x1="606.5" y1="756.5" x2="611.52608" y2="756.5" stroke="#0000FF" stroke-width="1"/>
<line x1="606.5" y1="766.5" x2="611.37326" y2="766.5" stroke="#0000FF" stroke-width="1"/>
<line x1="606.5" y1="775.5" x2="611.22044" y2="775.5" stroke="#0000FF" stroke-width="1"/>
<line x1="606.5" y1="784.5" x2="611.0846" y2="784.5" stroke="#0000FF" stroke-width="1"/>
<line x1="606.5" y1="793.5" x2="610.94876" y2="793.5" stroke="#0000FF" stroke-width="1"/>
<line x1="606.5" y1="804.5" x2="610.79594" y2="804.5" stroke="#0000FF" stroke-width="1"/>
<polyline points="671.4,349.3 669.2,358.6 660.0,367.8 654.7,377.1 649.4,386.3 645.9,395.6 642.4,404.8 639.7,414.1 636.9,423.3 634.7,432.6 632.4,441.8 630.6,451.1 628.8,460.3 627.3,469.6 625.8,478.8 624.6,488.1 623.4,497.3 622.5,506.6 621.5,515.8 620.7,525.1 619.8,534.3 619.2,543.5 618.5,552.8 617.9,562.1 617.4,571.3 616.9,580.6 616.4,589.8 616.0,599.0 615.5,608.3 615.2,617.5 614.8,626.8 614.5,636.0 614.2,645.3 613.9,654.5 613.6,663.8 613.3,673.1 613.1,682.3 612.9,691.5 612.6,700.8 612.4,710.0 612.2,719.3 612.1,728.5 611.9,737.8 611.7,747.0 611.5,756.3 611.4,765.6 611.2,774.8 611.1,784.1 610.9,793.3 610.8,804.4" fill="none" stroke="#0000FF" stroke-width="1"/>
<line x1="606.5" y1="349.3" x2="606.5" y2="804.5" stroke="#0000FF" stroke-width="1"/>
<line x1="606.5" y1="349.5" x2="671.5" y2="349.5" stroke="#0000FF" stroke-width="1"/>
<polyline points="671.4,349.3 648.7,358.3 636.4,368.3 628.5,377.5 624.6,386.4 621.3,396.3 619.0,405.4 616.8,414.6 615.1,423.3 614.0,433.4 613.1,442.3 612.4,451.4 612.1,460.6 611.4,470.6 611.0,479.1 610.3,488.4 610.3,497.3 610.3,500.0 606.5,500.0" fill="none" stroke="#0000FF" stroke-width="1"/>
<rect x="675.4" y="344.3" width="24.0" height="10" fill="#fff"/>
<text x="676.6" y="351.8" font-size="6.8" fill="#2a2aff" letter-spacing="0.6">382.3</text>
<rect x="664.0" y="362.8" width="24.0" height="10" fill="#fff"/>
<text x="665.2" y="370.3" font-size="6.8" fill="#2a2aff" letter-spacing="0.6">314.8</text>
<rect x="653.4" y="381.3" width="24.0" height="10" fill="#fff"/>
<text x="654.6" y="388.8" font-size="6.8" fill="#2a2aff" letter-spacing="0.6">252.4</text>
<rect x="646.4" y="399.8" width="24.0" height="10" fill="#fff"/>
<text x="647.6" y="407.3" font-size="6.8" fill="#2a2aff" letter-spacing="0.6">211.6</text>
<rect x="640.9" y="418.3" width="24.0" height="10" fill="#fff"/>
<text x="642.1" y="425.8" font-size="6.8" fill="#2a2aff" letter-spacing="0.6">179.1</text>
<rect x="636.4" y="436.8" width="24.0" height="10" fill="#fff"/>
<text x="637.6" y="444.3" font-size="6.8" fill="#2a2aff" letter-spacing="0.6">152.6</text>
<rect x="632.8" y="455.3" width="24.0" height="10" fill="#fff"/>
<text x="634.0" y="462.8" font-size="6.8" fill="#2a2aff" letter-spacing="0.6">131.1</text>
<rect x="629.8" y="473.8" width="24.0" height="10" fill="#fff"/>
<text x="631.0" y="481.3" font-size="6.8" fill="#2a2aff" letter-spacing="0.6">113.8</text>
<rect x="627.4" y="492.3" width="19.8" height="10" fill="#fff"/>
<text x="628.6" y="499.8" font-size="6.8" fill="#2a2aff" letter-spacing="0.6">99.7</text>
<rect x="625.5" y="510.8" width="19.8" height="10" fill="#fff"/>
<text x="626.7" y="518.3" font-size="6.8" fill="#2a2aff" letter-spacing="0.6">88.2</text>
<rect x="623.8" y="529.3" width="19.8" height="10" fill="#fff"/>
<text x="625.0" y="536.8" font-size="6.8" fill="#2a2aff" letter-spacing="0.6">78.6</text>
<rect x="622.5" y="547.8" width="19.8" height="10" fill="#fff"/>
<text x="623.7" y="555.3" font-size="6.8" fill="#2a2aff" letter-spacing="0.6">70.7</text>
<rect x="621.4" y="566.3" width="19.8" height="10" fill="#fff"/>
<text x="622.6" y="573.8" font-size="6.8" fill="#2a2aff" letter-spacing="0.6">63.9</text>
<rect x="620.4" y="584.8" width="19.8" height="10" fill="#fff"/>
<text x="621.6" y="592.3" font-size="6.8" fill="#2a2aff" letter-spacing="0.6">58.2</text>
<rect x="619.5" y="603.3" width="19.8" height="10" fill="#fff"/>
<text x="620.7" y="610.8" font-size="6.8" fill="#2a2aff" letter-spacing="0.6">53.2</text>
<rect x="618.8" y="621.8" width="19.8" height="10" fill="#fff"/>
<text x="620.0" y="629.3" font-size="6.8" fill="#2a2aff" letter-spacing="0.6">48.9</text>
<rect x="618.2" y="640.3" width="19.8" height="10" fill="#fff"/>
<text x="619.4" y="647.8" font-size="6.8" fill="#2a2aff" letter-spacing="0.6">45.2</text>
<rect x="617.6" y="658.8" width="19.8" height="10" fill="#fff"/>
<text x="618.8" y="666.3" font-size="6.8" fill="#2a2aff" letter-spacing="0.6">41.8</text>
<rect x="617.1" y="677.3" width="19.8" height="10" fill="#fff"/>
<text x="618.3" y="684.8" font-size="6.8" fill="#2a2aff" letter-spacing="0.6">38.8</text>
<rect x="616.6" y="695.8" width="19.8" height="10" fill="#fff"/>
<text x="617.8" y="703.3" font-size="6.8" fill="#2a2aff" letter-spacing="0.6">36.2</text>
<rect x="616.2" y="714.3" width="19.8" height="10" fill="#fff"/>
<text x="617.4" y="721.8" font-size="6.8" fill="#2a2aff" letter-spacing="0.6">33.8</text>
<rect x="615.9" y="732.8" width="19.8" height="10" fill="#fff"/>
<text x="617.1" y="740.3" font-size="6.8" fill="#2a2aff" letter-spacing="0.6">31.6</text>
<rect x="615.5" y="751.3" width="19.8" height="10" fill="#fff"/>
<text x="616.7" y="758.8" font-size="6.8" fill="#2a2aff" letter-spacing="0.6">29.6</text>
<rect x="615.2" y="769.8" width="19.8" height="10" fill="#fff"/>
<text x="616.4" y="777.3" font-size="6.8" fill="#2a2aff" letter-spacing="0.6">27.8</text>
<rect x="614.9" y="788.3" width="19.8" height="10" fill="#fff"/>
<text x="616.1" y="795.8" font-size="6.8" fill="#2a2aff" letter-spacing="0.6">26.2</text>
<rect x="614.8" y="799.4" width="19.8" height="10" fill="#fff"/>
<text x="616.0" y="806.9" font-size="6.8" fill="#2a2aff" letter-spacing="0.6">25.3</text>
<rect x="88.5" y="562.5" width="386" height="296.5" fill="#fff" stroke="#000" stroke-width="1"/>
<line x1="120.5" y1="562.5" x2="120.5" y2="859.5" stroke="#000" stroke-width="1"/>
<line x1="152.5" y1="562.5" x2="152.5" y2="859.5" stroke="#000" stroke-width="1"/>
<line x1="184.5" y1="562.5" x2="184.5" y2="859.5" stroke="#000" stroke-width="1"/>
<line x1="216.5" y1="562.5" x2="216.5" y2="859.5" stroke="#000" stroke-width="1"/>
<line x1="249.5" y1="562.5" x2="249.5" y2="859.5" stroke="#000" stroke-width="1"/>
<line x1="281.5" y1="562.5" x2="281.5" y2="859.5" stroke="#000" stroke-width="1"/>
<line x1="313.5" y1="562.5" x2="313.5" y2="859.5" stroke="#000" stroke-width="1"/>
<line x1="345.5" y1="562.5" x2="345.5" y2="859.5" stroke="#000" stroke-width="1"/>
<line x1="377.5" y1="562.5" x2="377.5" y2="859.5" stroke="#000" stroke-width="1"/>
<line x1="410.5" y1="562.5" x2="410.5" y2="859.5" stroke="#000" stroke-width="1"/>
<line x1="442.5" y1="562.5" x2="442.5" y2="859.5" stroke="#000" stroke-width="1"/>
<line x1="88.5" y1="591.5" x2="474.5" y2="591.5" stroke="#000" stroke-width="1"/>
<line x1="88.5" y1="606.5" x2="474.5" y2="606.5" stroke="#000" stroke-width="1"/>
<line x1="88.5" y1="622.5" x2="474.5" y2="622.5" stroke="#000" stroke-width="1"/>
<line x1="88.5" y1="638.5" x2="474.5" y2="638.5" stroke="#000" stroke-width="1"/>
<line x1="88.5" y1="654.5" x2="474.5" y2="654.5" stroke="#000" stroke-width="1"/>
<line x1="88.5" y1="669.5" x2="474.5" y2="669.5" stroke="#000" stroke-width="1"/>
<line x1="88.5" y1="685.5" x2="474.5" y2="685.5" stroke="#000" stroke-width="1"/>
<line x1="88.5" y1="701.5" x2="474.5" y2="701.5" stroke="#000" stroke-width="1"/>
<line x1="88.5" y1="717.5" x2="474.5" y2="717.5" stroke="#000" stroke-width="1"/>
<line x1="88.5" y1="733.5" x2="474.5" y2="733.5" stroke="#000" stroke-width="1"/>
<line x1="88.5" y1="748.5" x2="474.5" y2="748.5" stroke="#000" stroke-width="1"/>
<line x1="88.5" y1="764.5" x2="474.5" y2="764.5" stroke="#000" stroke-width="1"/>
<line x1="88.5" y1="780.5" x2="474.5" y2="780.5" stroke="#000" stroke-width="1"/>
<line x1="88.5" y1="796.5" x2="474.5" y2="796.5" stroke="#000" stroke-width="1"/>
<line x1="88.5" y1="812.5" x2="474.5" y2="812.5" stroke="#000" stroke-width="1"/>
<line x1="88.5" y1="827.5" x2="474.5" y2="827.5" stroke="#000" stroke-width="1"/>
<line x1="88.5" y1="843.5" x2="474.5" y2="843.5" stroke="#000" stroke-width="1"/>
<line x1="88.5" y1="859.5" x2="474.5" y2="859.5" stroke="#000" stroke-width="1"/>
<text x="104.5" y="572" font-size="6.5" fill="#000" text-anchor="middle" letter-spacing="0.6">a</text>
<text x="104.5" y="582" font-size="6.5" fill="#000" text-anchor="middle" letter-spacing="0.85">[m]</text>
<text x="136.5" y="572" font-size="6.5" fill="#000" text-anchor="middle" letter-spacing="0.6">b</text>
<text x="136.5" y="582" font-size="6.5" fill="#000" text-anchor="middle" letter-spacing="0.85">[m]</text>
<text x="168.5" y="572" font-size="6.5" fill="#000" text-anchor="middle" letter-spacing="0.6">σ<tspan font-size="5" dy="1.5">R,d</tspan></text>
<text x="168.5" y="582" font-size="6.5" fill="#000" text-anchor="middle" letter-spacing="0.85">[kN/m²]</text>
<text x="200.5" y="572" font-size="6.5" fill="#000" text-anchor="middle" letter-spacing="0.6">R<tspan font-size="5" dy="1.5">n,d</tspan></text>
<text x="200.5" y="582" font-size="6.5" fill="#000" text-anchor="middle" letter-spacing="0.85">[kN/m]</text>
<text x="233.0" y="572" font-size="6.5" fill="#000" text-anchor="middle" letter-spacing="0.6">σ<tspan font-size="5" dy="1.5">E,k</tspan></text>
<text x="233.0" y="582" font-size="6.5" fill="#000" text-anchor="middle" letter-spacing="0.85">[kN/m²]</text>
<text x="265.5" y="572" font-size="6.5" fill="#000" text-anchor="middle" letter-spacing="0.6">s</text>
<text x="265.5" y="582" font-size="6.5" fill="#000" text-anchor="middle" letter-spacing="0.85">[cm]</text>
<text x="297.5" y="572" font-size="6.5" fill="#000" text-anchor="middle" letter-spacing="0.6">cal φ</text>
<text x="297.5" y="582" font-size="6.5" fill="#000" text-anchor="middle" letter-spacing="0.85">[°]</text>
<text x="329.5" y="572" font-size="6.5" fill="#000" text-anchor="middle" letter-spacing="0.6">cal c</text>
<text x="329.5" y="582" font-size="6.5" fill="#000" text-anchor="middle" letter-spacing="0.85">[kN/m²]</text>
<text x="361.5" y="572" font-size="6.5" fill="#000" text-anchor="middle" letter-spacing="0.6">γ<tspan font-size="5" dy="1">2</tspan></text>
<text x="361.5" y="582" font-size="6.5" fill="#000" text-anchor="middle" letter-spacing="0.85">[kN/m³]</text>
<text x="394.0" y="572" font-size="6.5" fill="#000" text-anchor="middle" letter-spacing="0.6">σ <tspan font-size="5" dy="1">ü</tspan></text>
<text x="394.0" y="582" font-size="6.5" fill="#000" text-anchor="middle" letter-spacing="0.85">[kN/m²]</text>
<text x="426.5" y="572" font-size="6.5" fill="#000" text-anchor="middle" letter-spacing="0.6">t <tspan font-size="5" dy="1.5">g</tspan></text>
<text x="426.5" y="582" font-size="6.5" fill="#000" text-anchor="middle" letter-spacing="0.85">[m]</text>
<text x="458.5" y="572" font-size="6.5" fill="#000" text-anchor="middle" letter-spacing="0.6">UK LS</text>
<text x="458.5" y="582" font-size="6.5" fill="#000" text-anchor="middle" letter-spacing="0.85">[m]</text>
<text x="104.5" y="601" font-size="6.5" fill="#000" text-anchor="middle" letter-spacing="0.45">10.00</text>
<text x="136.5" y="601" font-size="6.5" fill="#000" text-anchor="middle" letter-spacing="0.45">0.40</text>
<text x="168.5" y="601" font-size="6.5" fill="#000" text-anchor="middle" letter-spacing="0.45">290.7</text>
<text x="200.5" y="601" font-size="6.5" fill="#000" text-anchor="middle" letter-spacing="0.45">116.3</text>
<text x="233.0" y="601" font-size="6.5" fill="#000" text-anchor="middle" letter-spacing="0.45">204.0</text>
<text x="265.5" y="601" font-size="6.5" fill="#000" text-anchor="middle" letter-spacing="0.45">0.92</text>
<text x="297.5" y="601" font-size="6.5" fill="#000" text-anchor="middle" letter-spacing="0.45">27.5</text>
<text x="329.5" y="601" font-size="6.5" fill="#000" text-anchor="middle" letter-spacing="0.45">5.00</text>
<text x="361.5" y="601" font-size="6.5" fill="#000" text-anchor="middle" letter-spacing="0.45">20.00</text>
<text x="394.0" y="601" font-size="6.5" fill="#000" text-anchor="middle" letter-spacing="0.45">16.00</text>
<text x="426.5" y="601" font-size="6.5" fill="#000" text-anchor="middle" letter-spacing="0.45">4.05</text>
<text x="458.5" y="601" font-size="6.5" fill="#000" text-anchor="middle" letter-spacing="0.45">1.38</text>
<text x="104.5" y="616" font-size="6.5" fill="#000" text-anchor="middle" letter-spacing="0.45">10.00</text>
<text x="136.5" y="616" font-size="6.5" fill="#000" text-anchor="middle" letter-spacing="0.45">0.50</text>
<text x="168.5" y="616" font-size="6.5" fill="#000" text-anchor="middle" letter-spacing="0.45">301.3</text>
<text x="200.5" y="616" font-size="6.5" fill="#000" text-anchor="middle" letter-spacing="0.45">150.6</text>
<text x="233.0" y="616" font-size="6.5" fill="#000" text-anchor="middle" letter-spacing="0.45">211.4</text>
<text x="265.5" y="616" font-size="6.5" fill="#000" text-anchor="middle" letter-spacing="0.45">1.08</text>
<text x="297.5" y="616" font-size="6.5" fill="#000" text-anchor="middle" letter-spacing="0.45">27.5</text>
<text x="329.5" y="616" font-size="6.5" fill="#000" text-anchor="middle" letter-spacing="0.45">5.00</text>
<text x="361.5" y="616" font-size="6.5" fill="#000" text-anchor="middle" letter-spacing="0.45">20.00</text>
<text x="394.0" y="616" font-size="6.5" fill="#000" text-anchor="middle" letter-spacing="0.45">16.00</text>
<text x="426.5" y="616" font-size="6.5" fill="#000" text-anchor="middle" letter-spacing="0.45">4.54</text>
<text x="458.5" y="616" font-size="6.5" fill="#000" text-anchor="middle" letter-spacing="0.45">1.53</text>
<text x="104.5" y="632" font-size="6.5" fill="#000" text-anchor="middle" letter-spacing="0.45">10.00</text>
<text x="136.5" y="632" font-size="6.5" fill="#000" text-anchor="middle" letter-spacing="0.45">0.60</text>
<text x="168.5" y="632" font-size="6.5" fill="#000" text-anchor="middle" letter-spacing="0.45">311.8</text>
<text x="200.5" y="632" font-size="6.5" fill="#000" text-anchor="middle" letter-spacing="0.45">187.1</text>
<text x="233.0" y="632" font-size="6.5" fill="#000" text-anchor="middle" letter-spacing="0.45">218.8</text>
<text x="265.5" y="632" font-size="6.5" fill="#000" text-anchor="middle" letter-spacing="0.45">1.23</text>
<text x="297.5" y="632" font-size="6.5" fill="#000" text-anchor="middle" letter-spacing="0.45">27.5</text>
<text x="329.5" y="632" font-size="6.5" fill="#000" text-anchor="middle" letter-spacing="0.45">5.00</text>
<text x="361.5" y="632" font-size="6.5" fill="#000" text-anchor="middle" letter-spacing="0.45">20.00</text>
<text x="394.0" y="632" font-size="6.5" fill="#000" text-anchor="middle" letter-spacing="0.45">16.00</text>
<text x="426.5" y="632" font-size="6.5" fill="#000" text-anchor="middle" letter-spacing="0.45">4.99</text>
<text x="458.5" y="632" font-size="6.5" fill="#000" text-anchor="middle" letter-spacing="0.45">1.67</text>
<text x="104.5" y="648" font-size="6.5" fill="#000" text-anchor="middle" letter-spacing="0.45">10.00</text>
<text x="136.5" y="648" font-size="6.5" fill="#000" text-anchor="middle" letter-spacing="0.45">0.70</text>
<text x="168.5" y="648" font-size="6.5" fill="#000" text-anchor="middle" letter-spacing="0.45">322.2</text>
<text x="200.5" y="648" font-size="6.5" fill="#000" text-anchor="middle" letter-spacing="0.45">225.5</text>
<text x="233.0" y="648" font-size="6.5" fill="#000" text-anchor="middle" letter-spacing="0.45">226.1</text>
<text x="265.5" y="648" font-size="6.5" fill="#000" text-anchor="middle" letter-spacing="0.45">1.37</text>
<text x="297.5" y="648" font-size="6.5" fill="#000" text-anchor="middle" letter-spacing="0.45">27.5</text>
<text x="329.5" y="648" font-size="6.5" fill="#000" text-anchor="middle" letter-spacing="0.45">5.00</text>
<text x="361.5" y="648" font-size="6.5" fill="#000" text-anchor="middle" letter-spacing="0.45">20.00</text>
<text x="394.0" y="648" font-size="6.5" fill="#000" text-anchor="middle" letter-spacing="0.45">16.00</text>
<text x="426.5" y="648" font-size="6.5" fill="#000" text-anchor="middle" letter-spacing="0.45">5.42</text>
<text x="458.5" y="648" font-size="6.5" fill="#000" text-anchor="middle" letter-spacing="0.45">1.82</text>
<text x="104.5" y="664" font-size="6.5" fill="#000" text-anchor="middle" letter-spacing="0.45">10.00</text>
<text x="136.5" y="664" font-size="6.5" fill="#000" text-anchor="middle" letter-spacing="0.45">0.80</text>
<text x="168.5" y="664" font-size="6.5" fill="#000" text-anchor="middle" letter-spacing="0.45">332.5</text>
<text x="200.5" y="664" font-size="6.5" fill="#000" text-anchor="middle" letter-spacing="0.45">266.0</text>
<text x="233.0" y="664" font-size="6.5" fill="#000" text-anchor="middle" letter-spacing="0.45">233.4</text>
<text x="265.5" y="664" font-size="6.5" fill="#000" text-anchor="middle" letter-spacing="0.45">1.51</text>
<text x="297.5" y="664" font-size="6.5" fill="#000" text-anchor="middle" letter-spacing="0.45">27.5</text>
<text x="329.5" y="664" font-size="6.5" fill="#000" text-anchor="middle" letter-spacing="0.45">5.00</text>
<text x="361.5" y="664" font-size="6.5" fill="#000" text-anchor="middle" letter-spacing="0.45">20.00</text>
<text x="394.0" y="664" font-size="6.5" fill="#000" text-anchor="middle" letter-spacing="0.45">16.00</text>
<text x="426.5" y="664" font-size="6.5" fill="#000" text-anchor="middle" letter-spacing="0.45">5.83</text>
<text x="458.5" y="664" font-size="6.5" fill="#000" text-anchor="middle" letter-spacing="0.45">1.96</text>
<text x="104.5" y="679" font-size="6.5" fill="#000" text-anchor="middle" letter-spacing="0.45">10.00</text>
<text x="136.5" y="679" font-size="6.5" fill="#000" text-anchor="middle" letter-spacing="0.45">0.90</text>
<text x="168.5" y="679" font-size="6.5" fill="#000" text-anchor="middle" letter-spacing="0.45">374.6</text>
<text x="200.5" y="679" font-size="6.5" fill="#000" text-anchor="middle" letter-spacing="0.45">337.1</text>
<text x="233.0" y="679" font-size="6.5" fill="#000" text-anchor="middle" letter-spacing="0.45">262.9</text>
<text x="265.5" y="679" font-size="6.5" fill="#000" text-anchor="middle" letter-spacing="0.45">1.81</text>
<text x="297.5" y="679" font-size="6.5" fill="#000" text-anchor="middle" letter-spacing="0.45">29.0</text>
<text x="329.5" y="679" font-size="6.5" fill="#000" text-anchor="middle" letter-spacing="0.45">3.56</text>
<text x="361.5" y="679" font-size="6.5" fill="#000" text-anchor="middle" letter-spacing="0.45">19.54</text>
<text x="394.0" y="679" font-size="6.5" fill="#000" text-anchor="middle" letter-spacing="0.45">16.00</text>
<text x="426.5" y="679" font-size="6.5" fill="#000" text-anchor="middle" letter-spacing="0.45">6.47</text>
<text x="458.5" y="679" font-size="6.5" fill="#000" text-anchor="middle" letter-spacing="0.45">2.18</text>
<text x="104.5" y="695" font-size="6.5" fill="#000" text-anchor="middle" letter-spacing="0.45">10.00</text>
<text x="136.5" y="695" font-size="6.5" fill="#000" text-anchor="middle" letter-spacing="0.45">1.00</text>
<text x="168.5" y="695" font-size="6.5" fill="#000" text-anchor="middle" letter-spacing="0.45">397.1</text>
<text x="200.5" y="695" font-size="6.5" fill="#000" text-anchor="middle" letter-spacing="0.45">397.1</text>
<text x="233.0" y="695" font-size="6.5" fill="#000" text-anchor="middle" letter-spacing="0.45">278.7</text>
<text x="265.5" y="695" font-size="6.5" fill="#000" text-anchor="middle" letter-spacing="0.45">2.01</text>
<text x="297.5" y="695" font-size="6.5" fill="#000" text-anchor="middle" letter-spacing="0.45">29.5</text>
<text x="329.5" y="695" font-size="6.5" fill="#000" text-anchor="middle" letter-spacing="0.45">3.04</text>
<text x="361.5" y="695" font-size="6.5" fill="#000" text-anchor="middle" letter-spacing="0.45">18.91</text>
<text x="394.0" y="695" font-size="6.5" fill="#000" text-anchor="middle" letter-spacing="0.45">16.00</text>
<text x="426.5" y="695" font-size="6.5" fill="#000" text-anchor="middle" letter-spacing="0.45">6.95</text>
<text x="458.5" y="695" font-size="6.5" fill="#000" text-anchor="middle" letter-spacing="0.45">2.36</text>
<text x="104.5" y="711" font-size="6.5" fill="#000" text-anchor="middle" letter-spacing="0.45">10.00</text>
<text x="136.5" y="711" font-size="6.5" fill="#000" text-anchor="middle" letter-spacing="0.45">1.10</text>
<text x="168.5" y="711" font-size="6.5" fill="#000" text-anchor="middle" letter-spacing="0.45">415.7</text>
<text x="200.5" y="711" font-size="6.5" fill="#000" text-anchor="middle" letter-spacing="0.45">457.3</text>
<text x="233.0" y="711" font-size="6.5" fill="#000" text-anchor="middle" letter-spacing="0.45">291.7</text>
<text x="265.5" y="711" font-size="6.5" fill="#000" text-anchor="middle" letter-spacing="0.45">2.19</text>
<text x="297.5" y="711" font-size="6.5" fill="#000" text-anchor="middle" letter-spacing="0.45">29.9</text>
<text x="329.5" y="711" font-size="6.5" fill="#000" text-anchor="middle" letter-spacing="0.45">2.71</text>
<text x="361.5" y="711" font-size="6.5" fill="#000" text-anchor="middle" letter-spacing="0.45">18.31</text>
<text x="394.0" y="711" font-size="6.5" fill="#000" text-anchor="middle" letter-spacing="0.45">16.00</text>
<text x="426.5" y="711" font-size="6.5" fill="#000" text-anchor="middle" letter-spacing="0.45">7.39</text>
<text x="458.5" y="711" font-size="6.5" fill="#000" text-anchor="middle" letter-spacing="0.45">2.53</text>
<text x="104.5" y="727" font-size="6.5" fill="#000" text-anchor="middle" letter-spacing="0.45">10.00</text>
<text x="136.5" y="727" font-size="6.5" fill="#000" text-anchor="middle" letter-spacing="0.45">1.20</text>
<text x="168.5" y="727" font-size="6.5" fill="#000" text-anchor="middle" letter-spacing="0.45">432.8</text>
<text x="200.5" y="727" font-size="6.5" fill="#000" text-anchor="middle" letter-spacing="0.45">519.3</text>
<text x="233.0" y="727" font-size="6.5" fill="#000" text-anchor="middle" letter-spacing="0.45">303.7</text>
<text x="265.5" y="727" font-size="6.5" fill="#000" text-anchor="middle" letter-spacing="0.45">2.37</text>
<text x="297.5" y="727" font-size="6.5" fill="#000" text-anchor="middle" letter-spacing="0.45">30.1</text>
<text x="329.5" y="727" font-size="6.5" fill="#000" text-anchor="middle" letter-spacing="0.45">2.45</text>
<text x="361.5" y="727" font-size="6.5" fill="#000" text-anchor="middle" letter-spacing="0.45">17.77</text>
<text x="394.0" y="727" font-size="6.5" fill="#000" text-anchor="middle" letter-spacing="0.45">16.00</text>
<text x="426.5" y="727" font-size="6.5" fill="#000" text-anchor="middle" letter-spacing="0.45">7.81</text>
<text x="458.5" y="727" font-size="6.5" fill="#000" text-anchor="middle" letter-spacing="0.45">2.71</text>
<text x="104.5" y="743" font-size="6.5" fill="#000" text-anchor="middle" letter-spacing="0.45">10.00</text>
<text x="136.5" y="743" font-size="6.5" fill="#000" text-anchor="middle" letter-spacing="0.45">1.30</text>
<text x="168.5" y="743" font-size="6.5" fill="#000" text-anchor="middle" letter-spacing="0.45">448.6</text>
<text x="200.5" y="743" font-size="6.5" fill="#000" text-anchor="middle" letter-spacing="0.45">583.2</text>
<text x="233.0" y="743" font-size="6.5" fill="#000" text-anchor="middle" letter-spacing="0.45">314.8</text>
<text x="265.5" y="743" font-size="6.5" fill="#000" text-anchor="middle" letter-spacing="0.45">2.54</text>
<text x="297.5" y="743" font-size="6.5" fill="#000" text-anchor="middle" letter-spacing="0.45">30.3</text>
<text x="329.5" y="743" font-size="6.5" fill="#000" text-anchor="middle" letter-spacing="0.45">2.24</text>
<text x="361.5" y="743" font-size="6.5" fill="#000" text-anchor="middle" letter-spacing="0.45">17.29</text>
<text x="394.0" y="743" font-size="6.5" fill="#000" text-anchor="middle" letter-spacing="0.45">16.00</text>
<text x="426.5" y="743" font-size="6.5" fill="#000" text-anchor="middle" letter-spacing="0.45">8.21</text>
<text x="458.5" y="743" font-size="6.5" fill="#000" text-anchor="middle" letter-spacing="0.45">2.88</text>
<text x="104.5" y="758" font-size="6.5" fill="#000" text-anchor="middle" letter-spacing="0.45">10.00</text>
<text x="136.5" y="758" font-size="6.5" fill="#000" text-anchor="middle" letter-spacing="0.45">1.40</text>
<text x="168.5" y="758" font-size="6.5" fill="#000" text-anchor="middle" letter-spacing="0.45">463.8</text>
<text x="200.5" y="758" font-size="6.5" fill="#000" text-anchor="middle" letter-spacing="0.45">649.3</text>
<text x="233.0" y="758" font-size="6.5" fill="#000" text-anchor="middle" letter-spacing="0.45">325.5</text>
<text x="265.5" y="758" font-size="6.5" fill="#000" text-anchor="middle" letter-spacing="0.45">2.71</text>
<text x="297.5" y="758" font-size="6.5" fill="#000" text-anchor="middle" letter-spacing="0.45">30.5</text>
<text x="329.5" y="758" font-size="6.5" fill="#000" text-anchor="middle" letter-spacing="0.45">2.06</text>
<text x="361.5" y="758" font-size="6.5" fill="#000" text-anchor="middle" letter-spacing="0.45">16.86</text>
<text x="394.0" y="758" font-size="6.5" fill="#000" text-anchor="middle" letter-spacing="0.45">16.00</text>
<text x="426.5" y="758" font-size="6.5" fill="#000" text-anchor="middle" letter-spacing="0.45">8.59</text>
<text x="458.5" y="758" font-size="6.5" fill="#000" text-anchor="middle" letter-spacing="0.45">3.06</text>
<text x="104.5" y="774" font-size="6.5" fill="#000" text-anchor="middle" letter-spacing="0.45">10.00</text>
<text x="136.5" y="774" font-size="6.5" fill="#000" text-anchor="middle" letter-spacing="0.45">1.50</text>
<text x="168.5" y="774" font-size="6.5" fill="#000" text-anchor="middle" letter-spacing="0.45">478.3</text>
<text x="200.5" y="774" font-size="6.5" fill="#000" text-anchor="middle" letter-spacing="0.45">717.4</text>
<text x="233.0" y="774" font-size="6.5" fill="#000" text-anchor="middle" letter-spacing="0.45">335.6</text>
<text x="265.5" y="774" font-size="6.5" fill="#000" text-anchor="middle" letter-spacing="0.45">2.88</text>
<text x="297.5" y="774" font-size="6.5" fill="#000" text-anchor="middle" letter-spacing="0.45">30.6</text>
<text x="329.5" y="774" font-size="6.5" fill="#000" text-anchor="middle" letter-spacing="0.45">1.92</text>
<text x="361.5" y="774" font-size="6.5" fill="#000" text-anchor="middle" letter-spacing="0.45">16.47</text>
<text x="394.0" y="774" font-size="6.5" fill="#000" text-anchor="middle" letter-spacing="0.45">16.00</text>
<text x="426.5" y="774" font-size="6.5" fill="#000" text-anchor="middle" letter-spacing="0.45">8.96</text>
<text x="458.5" y="774" font-size="6.5" fill="#000" text-anchor="middle" letter-spacing="0.45">3.23</text>
<text x="104.5" y="790" font-size="6.5" fill="#000" text-anchor="middle" letter-spacing="0.45">10.00</text>
<text x="136.5" y="790" font-size="6.5" fill="#000" text-anchor="middle" letter-spacing="0.45">1.60</text>
<text x="168.5" y="790" font-size="6.5" fill="#000" text-anchor="middle" letter-spacing="0.45">492.3</text>
<text x="200.5" y="790" font-size="6.5" fill="#000" text-anchor="middle" letter-spacing="0.45">787.6</text>
<text x="233.0" y="790" font-size="6.5" fill="#000" text-anchor="middle" letter-spacing="0.45">345.5</text>
<text x="265.5" y="790" font-size="6.5" fill="#000" text-anchor="middle" letter-spacing="0.45">3.04</text>
<text x="297.5" y="790" font-size="6.5" fill="#000" text-anchor="middle" letter-spacing="0.45">30.8</text>
<text x="329.5" y="790" font-size="6.5" fill="#000" text-anchor="middle" letter-spacing="0.45">1.79</text>
<text x="361.5" y="790" font-size="6.5" fill="#000" text-anchor="middle" letter-spacing="0.45">16.12</text>
<text x="394.0" y="790" font-size="6.5" fill="#000" text-anchor="middle" letter-spacing="0.45">16.00</text>
<text x="426.5" y="790" font-size="6.5" fill="#000" text-anchor="middle" letter-spacing="0.45">9.32</text>
<text x="458.5" y="790" font-size="6.5" fill="#000" text-anchor="middle" letter-spacing="0.45">3.40</text>
<text x="104.5" y="806" font-size="6.5" fill="#000" text-anchor="middle" letter-spacing="0.45">10.00</text>
<text x="136.5" y="806" font-size="6.5" fill="#000" text-anchor="middle" letter-spacing="0.45">1.70</text>
<text x="168.5" y="806" font-size="6.5" fill="#000" text-anchor="middle" letter-spacing="0.45">505.9</text>
<text x="200.5" y="806" font-size="6.5" fill="#000" text-anchor="middle" letter-spacing="0.45">860.0</text>
<text x="233.0" y="806" font-size="6.5" fill="#000" text-anchor="middle" letter-spacing="0.45">355.0</text>
<text x="265.5" y="806" font-size="6.5" fill="#000" text-anchor="middle" letter-spacing="0.45">3.20</text>
<text x="297.5" y="806" font-size="6.5" fill="#000" text-anchor="middle" letter-spacing="0.45">30.9</text>
<text x="329.5" y="806" font-size="6.5" fill="#000" text-anchor="middle" letter-spacing="0.45">1.68</text>
<text x="361.5" y="806" font-size="6.5" fill="#000" text-anchor="middle" letter-spacing="0.45">15.81</text>
<text x="394.0" y="806" font-size="6.5" fill="#000" text-anchor="middle" letter-spacing="0.45">16.00</text>
<text x="426.5" y="806" font-size="6.5" fill="#000" text-anchor="middle" letter-spacing="0.45">9.66</text>
<text x="458.5" y="806" font-size="6.5" fill="#000" text-anchor="middle" letter-spacing="0.45">3.58</text>
<text x="104.5" y="822" font-size="6.5" fill="#000" text-anchor="middle" letter-spacing="0.45">10.00</text>
<text x="136.5" y="822" font-size="6.5" fill="#000" text-anchor="middle" letter-spacing="0.45">1.80</text>
<text x="168.5" y="822" font-size="6.5" fill="#000" text-anchor="middle" letter-spacing="0.45">519.1</text>
<text x="200.5" y="822" font-size="6.5" fill="#000" text-anchor="middle" letter-spacing="0.45">934.4</text>
<text x="233.0" y="822" font-size="6.5" fill="#000" text-anchor="middle" letter-spacing="0.45">364.3</text>
<text x="265.5" y="822" font-size="6.5" fill="#000" text-anchor="middle" letter-spacing="0.45">3.36</text>
<text x="297.5" y="822" font-size="6.5" fill="#000" text-anchor="middle" letter-spacing="0.45">31.0</text>
<text x="329.5" y="822" font-size="6.5" fill="#000" text-anchor="middle" letter-spacing="0.45">1.58</text>
<text x="361.5" y="822" font-size="6.5" fill="#000" text-anchor="middle" letter-spacing="0.45">15.52</text>
<text x="394.0" y="822" font-size="6.5" fill="#000" text-anchor="middle" letter-spacing="0.45">16.00</text>
<text x="426.5" y="822" font-size="6.5" fill="#000" text-anchor="middle" letter-spacing="0.45">10.00</text>
<text x="458.5" y="822" font-size="6.5" fill="#000" text-anchor="middle" letter-spacing="0.45">3.75</text>
<text x="104.5" y="837" font-size="6.5" fill="#000" text-anchor="middle" letter-spacing="0.45">10.00</text>
<text x="136.5" y="837" font-size="6.5" fill="#000" text-anchor="middle" letter-spacing="0.45">1.90</text>
<text x="168.5" y="837" font-size="6.5" fill="#000" text-anchor="middle" letter-spacing="0.45">532.1</text>
<text x="200.5" y="837" font-size="6.5" fill="#000" text-anchor="middle" letter-spacing="0.45">1010.9</text>
<text x="233.0" y="837" font-size="6.5" fill="#000" text-anchor="middle" letter-spacing="0.45">373.4</text>
<text x="265.5" y="837" font-size="6.5" fill="#000" text-anchor="middle" letter-spacing="0.45">3.52</text>
<text x="297.5" y="837" font-size="6.5" fill="#000" text-anchor="middle" letter-spacing="0.45">31.1</text>
<text x="329.5" y="837" font-size="6.5" fill="#000" text-anchor="middle" letter-spacing="0.45">1.49</text>
<text x="361.5" y="837" font-size="6.5" fill="#000" text-anchor="middle" letter-spacing="0.45">15.26</text>
<text x="394.0" y="837" font-size="6.5" fill="#000" text-anchor="middle" letter-spacing="0.45">16.00</text>
<text x="426.5" y="837" font-size="6.5" fill="#000" text-anchor="middle" letter-spacing="0.45">10.32</text>
<text x="458.5" y="837" font-size="6.5" fill="#000" text-anchor="middle" letter-spacing="0.45">3.93</text>
<text x="104.5" y="853" font-size="6.5" fill="#000" text-anchor="middle" letter-spacing="0.45">10.00</text>
<text x="136.5" y="853" font-size="6.5" fill="#000" text-anchor="middle" letter-spacing="0.45">2.00</text>
<text x="168.5" y="853" font-size="6.5" fill="#000" text-anchor="middle" letter-spacing="0.45">544.8</text>
<text x="200.5" y="853" font-size="6.5" fill="#000" text-anchor="middle" letter-spacing="0.45">1089.5</text>
<text x="233.0" y="853" font-size="6.5" fill="#000" text-anchor="middle" letter-spacing="0.45">382.3</text>
<text x="265.5" y="853" font-size="6.5" fill="#000" text-anchor="middle" letter-spacing="0.45">3.67</text>
<text x="297.5" y="853" font-size="6.5" fill="#000" text-anchor="middle" letter-spacing="0.45">31.1</text>
<text x="329.5" y="853" font-size="6.5" fill="#000" text-anchor="middle" letter-spacing="0.45">1.41</text>
<text x="361.5" y="853" font-size="6.5" fill="#000" text-anchor="middle" letter-spacing="0.45">15.02</text>
<text x="394.0" y="853" font-size="6.5" fill="#000" text-anchor="middle" letter-spacing="0.45">16.00</text>
<text x="426.5" y="853" font-size="6.5" fill="#000" text-anchor="middle" letter-spacing="0.45">10.64</text>
<text x="458.5" y="853" font-size="6.5" fill="#000" text-anchor="middle" letter-spacing="0.45">4.10</text>
<text x="93" y="869.8" font-size="6.5" fill="#000" letter-spacing="0.6">σ<tspan font-size="4.5" dy="1.5">E,k</tspan><tspan dy="-1.5"> = σ</tspan><tspan font-size="4.5" dy="1.5">R,k</tspan><tspan dy="-1.5"> / (γ</tspan><tspan font-size="4.5" dy="1.5">R,v</tspan><tspan dy="-1.5"> · γ</tspan><tspan font-size="4.5" dy="1.5">(G,Q)</tspan><tspan dy="-1.5">) = σ</tspan><tspan font-size="4.5" dy="1.5">R,k</tspan><tspan dy="-1.5"> / (1.40 · 1.43) = σ</tspan><tspan font-size="4.5" dy="1.5">R,k</tspan><tspan dy="-1.5"> / 1.99 (für Setzungen)</tspan></text>
<text x="93" y="878.6" font-size="6.5" fill="#000" letter-spacing="0.73">Verhältnis Veränderliche(Q)/Gesamtlasten(G+Q) [-] = 0.50</text>
<defs><clipPath id="cp"><polygon points="888.02,844.30 888.02,592.26 888.72,592.26 905.08,583.07 921.43,573.97 937.78,564.95 954.14,556.02 970.50,519.52 986.85,500.01 1003.21,483.89 1019.56,469.06 1035.91,455.36 1052.27,442.19 1068.62,429.61 1084.98,417.48 1101.34,405.68 1117.69,394.24 1134.05,382.97 1150.40,371.96 1150.40,844.30"/></clipPath></defs>
<polygon points="888.02,844.30 888.02,592.26 888.72,592.26 905.08,583.07 921.43,573.97 937.78,564.95 954.14,556.02 970.50,519.52 986.85,500.01 1003.21,483.89 1019.56,469.06 1035.91,455.36 1052.27,442.19 1068.62,429.61 1084.98,417.48 1101.34,405.68 1117.69,394.24 1134.05,382.97 1150.40,371.96 1150.40,844.30" fill="#DCDCDC"/>
<g clip-path="url(#cp)"><line x1="888.5" y1="320" x2="888.5" y2="844.3" stroke="#000" stroke-width="1"/><line x1="921.5" y1="320" x2="921.5" y2="844.3" stroke="#000" stroke-width="1"/><line x1="954.5" y1="320" x2="954.5" y2="844.3" stroke="#000" stroke-width="1"/><line x1="986.5" y1="320" x2="986.5" y2="844.3" stroke="#000" stroke-width="1"/><line x1="1019.5" y1="320" x2="1019.5" y2="844.3" stroke="#000" stroke-width="1"/><line x1="1052.5" y1="320" x2="1052.5" y2="844.3" stroke="#000" stroke-width="1"/><line x1="1084.5" y1="320" x2="1084.5" y2="844.3" stroke="#000" stroke-width="1"/><line x1="1117.5" y1="320" x2="1117.5" y2="844.3" stroke="#000" stroke-width="1"/><line x1="1150.5" y1="320" x2="1150.5" y2="844.3" stroke="#000" stroke-width="1"/><line x1="888.72" y1="801.5" x2="1150.4" y2="801.5" stroke="#000" stroke-width="1"/><line x1="888.72" y1="758.5" x2="1150.4" y2="758.5" stroke="#000" stroke-width="1"/><line x1="888.72" y1="714.5" x2="1150.4" y2="714.5" stroke="#000" stroke-width="1"/><line x1="888.72" y1="671.5" x2="1150.4" y2="671.5" stroke="#000" stroke-width="1"/><line x1="888.72" y1="628.5" x2="1150.4" y2="628.5" stroke="#000" stroke-width="1"/><line x1="888.72" y1="584.5" x2="1150.4" y2="584.5" stroke="#000" stroke-width="1"/><line x1="888.72" y1="541.5" x2="1150.4" y2="541.5" stroke="#000" stroke-width="1"/><line x1="888.72" y1="497.5" x2="1150.4" y2="497.5" stroke="#000" stroke-width="1"/><line x1="888.72" y1="454.5" x2="1150.4" y2="454.5" stroke="#000" stroke-width="1"/><line x1="888.72" y1="411.5" x2="1150.4" y2="411.5" stroke="#000" stroke-width="1"/><line x1="888.72" y1="367.5" x2="1150.4" y2="367.5" stroke="#000" stroke-width="1"/></g>
<line x1="823.3" y1="324.5" x2="823.3" y2="844.3" stroke="#000" stroke-width="1"/>
<line x1="823.3" y1="324.5" x2="1150.4" y2="324.5" stroke="#000" stroke-width="1"/>
<line x1="1150.4" y1="324.5" x2="1150.4" y2="844.3" stroke="#000" stroke-width="1"/>
<line x1="823.3" y1="844.3" x2="1150.4" y2="844.3" stroke="#000" stroke-width="1"/>
<polyline points="888.7,592.3 905.1,583.1 921.4,574.0 937.8,565.0 954.1,556.0 970.5,519.5 986.9,500.0 1003.2,483.9 1019.6,469.1 1035.9,455.4 1052.3,442.2 1068.6,429.6 1085.0,417.5 1101.3,405.7 1117.7,394.2 1134.0,383.0 1150.4,372.0" fill="none" stroke="#FF0000" stroke-width="1"/>
<polyline points="888.7,704.3 890.4,706.1 892.0,707.8 893.6,709.5 895.3,711.1 896.9,712.7 898.5,714.2 900.2,715.7 901.8,717.1 903.4,718.5 905.1,719.8 906.7,721.0 908.3,722.2 910.0,723.3 911.6,724.4 913.3,725.5 914.9,726.5 916.5,727.5 918.2,728.5 919.8,729.5 921.4,730.4 923.1,731.3 924.7,732.1 926.3,732.9 928.0,733.7 929.6,734.4 931.2,735.2 932.9,735.9 934.5,736.6 936.1,737.4 937.8,738.0 939.4,738.7 941.1,739.4 942.7,740.0 944.3,740.7 946.0,741.3 947.6,741.9 949.2,742.5 950.9,743.1 952.5,743.7 954.1,744.3 955.8,744.9 957.4,745.5 959.0,746.0 960.7,746.6 962.3,747.1 964.0,747.6 965.6,748.1 967.2,748.6 968.9,749.1 970.5,749.5 972.1,749.9 973.8,750.3 975.4,750.7 977.0,751.1 978.7,751.5 980.3,751.9 981.9,752.3 983.6,752.6 985.2,753.0 986.9,753.3 988.5,753.7 990.1,754.0 991.8,754.3 993.4,754.6 995.0,755.0 996.7,755.3 998.3,755.6 999.9,755.9 1001.6,756.2 1003.2,756.5 1004.8,756.8 1006.5,757.1 1008.1,757.4 1009.7,757.7 1011.4,758.0 1013.0,758.3 1014.7,758.5 1016.3,758.8 1017.9,759.1 1019.6,759.4 1021.2,759.6 1022.8,759.9 1024.5,760.1 1026.1,760.4 1027.7,760.6 1029.4,760.9 1031.0,761.1 1032.6,761.3 1034.3,761.6 1035.9,761.8 1037.6,762.0 1039.2,762.3 1040.8,762.5 1042.5,762.7 1044.1,762.9 1045.7,763.2 1047.4,763.4 1049.0,763.6 1050.6,763.8 1052.3,764.0 1053.9,764.2 1055.5,764.4 1057.2,764.7 1058.8,764.9 1060.4,765.1 1062.1,765.3 1063.7,765.5 1065.4,765.7 1067.0,765.9 1068.6,766.1 1070.3,766.2 1071.9,766.4 1073.5,766.6 1075.2,766.7 1076.8,766.9 1078.4,767.1 1080.1,767.2 1081.7,767.4 1083.3,767.5 1085.0,767.7 1086.6,767.9 1088.3,768.0 1089.9,768.2 1091.5,768.3 1093.2,768.5 1094.8,768.6 1096.4,768.8 1098.1,768.9 1099.7,769.1 1101.3,769.2 1103.0,769.4 1104.6,769.5 1106.2,769.7 1107.9,769.8 1109.5,770.0 1111.1,770.1 1112.8,770.3 1114.4,770.4 1116.1,770.5 1117.7,770.7 1119.3,770.8 1121.0,770.9 1122.6,771.1 1124.2,771.2 1125.9,771.3 1127.5,771.5 1129.1,771.6 1130.8,771.7 1132.4,771.9 1134.0,772.0 1135.7,772.1 1137.3,772.2 1139.0,772.3 1140.6,772.4 1142.2,772.5 1143.9,772.6 1145.5,772.7 1147.1,772.9 1148.8,773.0 1150.4,773.1" fill="none" stroke="#0000FF" stroke-width="1"/>
<text x="886.2" y="702.8" font-size="6.5" fill="#3030ff" text-anchor="end" letter-spacing="0.8">0.5 cm</text>
<polyline points="896.9,587.7 896.9,587.7 898.5,590.7 900.2,593.6 901.8,596.5 903.4,599.2 905.1,601.9 906.7,604.3 908.3,606.6 910.0,608.9 911.6,611.1 913.3,613.2 914.9,615.3 916.5,617.3 918.2,619.3 919.8,621.3 921.4,623.1 923.1,624.8 924.7,626.5 926.3,628.1 928.0,629.6 929.6,631.2 931.2,632.7 932.9,634.1 934.5,635.6 936.1,637.0 937.8,638.4 939.4,639.7 941.1,641.1 942.7,642.4 944.3,643.6 946.0,644.9 947.6,646.1 949.2,647.3 950.9,648.5 952.5,649.7 954.1,650.8 955.8,652.0 957.4,653.2 959.0,654.4 960.7,655.5 962.3,656.5 964.0,657.6 965.6,658.6 967.2,659.5 968.9,660.4 970.5,661.3 972.1,662.1 973.8,663.0 975.4,663.8 977.0,664.5 978.7,665.3 980.3,666.1 981.9,666.8 983.6,667.5 985.2,668.2 986.9,668.9 988.5,669.6 990.1,670.3 991.8,670.9 993.4,671.6 995.0,672.2 996.7,672.8 998.3,673.4 999.9,674.0 1001.6,674.6 1003.2,675.2 1004.8,675.8 1006.5,676.4 1008.1,677.0 1009.7,677.6 1011.4,678.2 1013.0,678.8 1014.7,679.4 1016.3,679.9 1017.9,680.5 1019.6,681.0 1021.2,681.6 1022.8,682.1 1024.5,682.6 1026.1,683.1 1027.7,683.6 1029.4,684.0 1031.0,684.5 1032.6,685.0 1034.3,685.4 1035.9,685.9 1037.6,686.4 1039.2,686.8 1040.8,687.3 1042.5,687.7 1044.1,688.2 1045.7,688.6 1047.4,689.0 1049.0,689.5 1050.6,689.9 1052.3,690.3 1053.9,690.7 1055.5,691.2 1057.2,691.6 1058.8,692.0 1060.4,692.4 1062.1,692.8 1063.7,693.2 1065.4,693.6 1067.0,694.0 1068.6,694.4 1070.3,694.7 1071.9,695.1 1073.5,695.4 1075.2,695.8 1076.8,696.1 1078.4,696.4 1080.1,696.7 1081.7,697.1 1083.3,697.4 1085.0,697.7 1086.6,698.0 1088.3,698.3 1089.9,698.7 1091.5,699.0 1093.2,699.3 1094.8,699.6 1096.4,699.9 1098.1,700.2 1099.7,700.5 1101.3,700.8 1103.0,701.1 1104.6,701.4 1106.2,701.7 1107.9,702.0 1109.5,702.2 1111.1,702.5 1112.8,702.8 1114.4,703.1 1116.1,703.4 1117.7,703.6 1119.3,703.9 1121.0,704.2 1122.6,704.5 1124.2,704.7 1125.9,705.0 1127.5,705.2 1129.1,705.5 1130.8,705.8 1132.4,706.0 1134.0,706.3 1135.7,706.5 1137.3,706.7 1139.0,706.9 1140.6,707.1 1142.2,707.4 1143.9,707.6 1145.5,707.8 1147.1,708.0 1148.8,708.2 1150.4,708.4" fill="none" stroke="#0000FF" stroke-width="1"/>
<text x="894.4" y="586.2" font-size="6.5" fill="#3030ff" text-anchor="end" letter-spacing="0.8">1.0 cm</text>
<polyline points="953.0,556.7 954.1,557.9 955.8,559.7 957.4,561.5 959.0,563.2 960.7,564.9 962.3,566.5 964.0,568.0 965.6,569.5 967.2,570.9 968.9,572.3 970.5,573.6 972.1,574.9 973.8,576.1 975.4,577.3 977.0,578.5 978.7,579.6 980.3,580.8 981.9,581.9 983.6,582.9 985.2,584.0 986.9,585.0 988.5,586.1 990.1,587.1 991.8,588.0 993.4,589.0 995.0,590.0 996.7,590.9 998.3,591.8 999.9,592.7 1001.6,593.6 1003.2,594.5 1004.8,595.4 1006.5,596.3 1008.1,597.2 1009.7,598.1 1011.4,599.0 1013.0,599.9 1014.7,600.7 1016.3,601.6 1017.9,602.4 1019.6,603.2 1021.2,604.0 1022.8,604.8 1024.5,605.5 1026.1,606.3 1027.7,607.0 1029.4,607.7 1031.0,608.4 1032.6,609.1 1034.3,609.8 1035.9,610.5 1037.6,611.2 1039.2,611.9 1040.8,612.6 1042.5,613.3 1044.1,613.9 1045.7,614.6 1047.4,615.2 1049.0,615.9 1050.6,616.5 1052.3,617.1 1053.9,617.8 1055.5,618.4 1057.2,619.0 1058.8,619.7 1060.4,620.3 1062.1,620.9 1063.7,621.5 1065.4,622.1 1067.0,622.7 1068.6,623.3 1070.3,623.8 1071.9,624.3 1073.5,624.8 1075.2,625.3 1076.8,625.8 1078.4,626.3 1080.1,626.8 1081.7,627.3 1083.3,627.7 1085.0,628.2 1086.6,628.7 1088.3,629.2 1089.9,629.7 1091.5,630.1 1093.2,630.6 1094.8,631.0 1096.4,631.5 1098.1,631.9 1099.7,632.4 1101.3,632.8 1103.0,633.3 1104.6,633.7 1106.2,634.2 1107.9,634.6 1109.5,635.0 1111.1,635.5 1112.8,635.9 1114.4,636.3 1116.1,636.7 1117.7,637.1 1119.3,637.5 1121.0,637.9 1122.6,638.3 1124.2,638.7 1125.9,639.1 1127.5,639.5 1129.1,639.9 1130.8,640.3 1132.4,640.7 1134.0,641.1 1135.7,641.4 1137.3,641.7 1139.0,642.1 1140.6,642.4 1142.2,642.7 1143.9,643.0 1145.5,643.3 1147.1,643.7 1148.8,644.0 1150.4,644.3" fill="none" stroke="#0000FF" stroke-width="1"/>
<text x="950.5" y="555.2" font-size="6.5" fill="#3030ff" text-anchor="end" letter-spacing="0.8">1.5 cm</text>
<polyline points="986.0,501.0 986.9,501.7 988.5,503.0 990.1,504.4 991.8,505.7 993.4,507.0 995.0,508.2 996.7,509.5 998.3,510.7 999.9,511.9 1001.6,513.1 1003.2,514.2 1004.8,515.5 1006.5,516.7 1008.1,517.9 1009.7,519.1 1011.4,520.3 1013.0,521.5 1014.7,522.6 1016.3,523.7 1017.9,524.8 1019.6,525.9 1021.2,527.0 1022.8,528.0 1024.5,529.0 1026.1,530.0 1027.7,531.0 1029.4,531.9 1031.0,532.9 1032.6,533.8 1034.3,534.7 1035.9,535.6 1037.6,536.6 1039.2,537.5 1040.8,538.4 1042.5,539.3 1044.1,540.2 1045.7,541.1 1047.4,541.9 1049.0,542.8 1050.6,543.6 1052.3,544.5 1053.9,545.3 1055.5,546.2 1057.2,547.0 1058.8,547.9 1060.4,548.7 1062.1,549.5 1063.7,550.3 1065.4,551.1 1067.0,551.9 1068.6,552.6 1070.3,553.3 1071.9,554.0 1073.5,554.7 1075.2,555.4 1076.8,556.0 1078.4,556.7 1080.1,557.3 1081.7,558.0 1083.3,558.6 1085.0,559.3 1086.6,559.9 1088.3,560.5 1089.9,561.2 1091.5,561.8 1093.2,562.4 1094.8,563.0 1096.4,563.6 1098.1,564.2 1099.7,564.8 1101.3,565.4 1103.0,566.0 1104.6,566.6 1106.2,567.2 1107.9,567.8 1109.5,568.3 1111.1,568.9 1112.8,569.5 1114.4,570.0 1116.1,570.6 1117.7,571.1 1119.3,571.7 1121.0,572.2 1122.6,572.8 1124.2,573.3 1125.9,573.8 1127.5,574.3 1129.1,574.9 1130.8,575.4 1132.4,575.9 1134.0,576.4 1135.7,576.8 1137.3,577.3 1139.0,577.7 1140.6,578.1 1142.2,578.6 1143.9,579.0 1145.5,579.4 1147.1,579.8 1148.8,580.2 1150.4,580.7" fill="none" stroke="#0000FF" stroke-width="1"/>
<text x="983.5" y="499.5" font-size="6.5" fill="#3030ff" text-anchor="end" letter-spacing="0.8">2.0 cm</text>
<polyline points="1032.1,458.6 1032.6,459.0 1034.3,460.2 1035.9,461.3 1037.6,462.5 1039.2,463.6 1040.8,464.8 1042.5,465.9 1044.1,467.0 1045.7,468.1 1047.4,469.2 1049.0,470.2 1050.6,471.3 1052.3,472.3 1053.9,473.4 1055.5,474.5 1057.2,475.5 1058.8,476.6 1060.4,477.6 1062.1,478.6 1063.7,479.6 1065.4,480.6 1067.0,481.6 1068.6,482.5 1070.3,483.4 1071.9,484.3 1073.5,485.1 1075.2,486.0 1076.8,486.8 1078.4,487.6 1080.1,488.4 1081.7,489.2 1083.3,490.0 1085.0,490.8 1086.6,491.6 1088.3,492.4 1089.9,493.2 1091.5,494.0 1093.2,494.8 1094.8,495.5 1096.4,496.3 1098.1,497.0 1099.7,497.8 1101.3,498.5 1103.0,499.2 1104.6,500.0 1106.2,500.7 1107.9,501.4 1109.5,502.2 1111.1,502.9 1112.8,503.6 1114.4,504.3 1116.1,505.0 1117.7,505.6 1119.3,506.3 1121.0,507.0 1122.6,507.7 1124.2,508.4 1125.9,509.0 1127.5,509.7 1129.1,510.3 1130.8,511.0 1132.4,511.6 1134.0,512.2 1135.7,512.8 1137.3,513.3 1139.0,513.9 1140.6,514.4 1142.2,515.0 1143.9,515.5 1145.5,516.0 1147.1,516.5 1148.8,517.1 1150.4,517.6" fill="none" stroke="#0000FF" stroke-width="1"/>
<text x="1029.6" y="457.1" font-size="6.5" fill="#3030ff" text-anchor="end" letter-spacing="0.8">2.5 cm</text>
<polyline points="1080.9,420.5 1081.7,421.0 1083.3,421.9 1085.0,422.9 1086.6,423.9 1088.3,424.8 1089.9,425.8 1091.5,426.7 1093.2,427.6 1094.8,428.5 1096.4,429.4 1098.1,430.3 1099.7,431.2 1101.3,432.1 1103.0,433.0 1104.6,433.9 1106.2,434.8 1107.9,435.6 1109.5,436.5 1111.1,437.4 1112.8,438.2 1114.4,439.0 1116.1,439.9 1117.7,440.7 1119.3,441.5 1121.0,442.3 1122.6,443.1 1124.2,443.9 1125.9,444.7 1127.5,445.5 1129.1,446.3 1130.8,447.1 1132.4,447.8 1134.0,448.6 1135.7,449.3 1137.3,449.9 1139.0,450.6 1140.6,451.2 1142.2,451.9 1143.9,452.5 1145.5,453.1 1147.1,453.8 1148.8,454.4 1150.4,455.0" fill="none" stroke="#0000FF" stroke-width="1"/>
<text x="1078.4" y="419.0" font-size="6.5" fill="#3030ff" text-anchor="end" letter-spacing="0.8">3.0 cm</text>
<polyline points="1132.0,384.4 1132.4,384.6 1134.0,385.5 1135.7,386.3 1137.3,387.0 1139.0,387.8 1140.6,388.5 1142.2,389.3 1143.9,390.0 1145.5,390.8 1147.1,391.5 1148.8,392.2 1150.4,392.9" fill="none" stroke="#0000FF" stroke-width="1"/>
<text x="1129.5" y="382.9" font-size="6.5" fill="#3030ff" text-anchor="end" letter-spacing="0.8">3.5 cm</text>
<text x="815" y="843.3" font-size="6.5" fill="#000" text-anchor="end" letter-spacing="0.8">0.0</text>
<text x="815" y="799.9" font-size="6.5" fill="#000" text-anchor="end" letter-spacing="0.8">50.0</text>
<text x="815" y="756.6" font-size="6.5" fill="#000" text-anchor="end" letter-spacing="0.8">100.0</text>
<text x="815" y="713.2" font-size="6.5" fill="#000" text-anchor="end" letter-spacing="0.8">150.0</text>
<text x="815" y="669.9" font-size="6.5" fill="#000" text-anchor="end" letter-spacing="0.8">200.0</text>
<text x="815" y="626.5" font-size="6.5" fill="#000" text-anchor="end" letter-spacing="0.8">250.0</text>
<text x="815" y="583.2" font-size="6.5" fill="#000" text-anchor="end" letter-spacing="0.8">300.0</text>
<text x="815" y="539.8" font-size="6.5" fill="#000" text-anchor="end" letter-spacing="0.8">350.0</text>
<text x="815" y="496.5" font-size="6.5" fill="#000" text-anchor="end" letter-spacing="0.8">400.0</text>
<text x="815" y="453.1" font-size="6.5" fill="#000" text-anchor="end" letter-spacing="0.8">450.0</text>
<text x="815" y="409.8" font-size="6.5" fill="#000" text-anchor="end" letter-spacing="0.8">500.0</text>
<text x="815" y="366.4" font-size="6.5" fill="#000" text-anchor="end" letter-spacing="0.8">550.0</text>
<text x="815" y="323.1" font-size="6.5" fill="#000" text-anchor="end" letter-spacing="0.8">600.0</text>
<text x="823.3" y="854" font-size="6.5" fill="#000" text-anchor="middle" letter-spacing="0.4">0.0</text>
<text x="856.0" y="854" font-size="6.5" fill="#000" text-anchor="middle" letter-spacing="0.4">0.2</text>
<text x="888.7" y="854" font-size="6.5" fill="#000" text-anchor="middle" letter-spacing="0.4">0.4</text>
<text x="921.4" y="854" font-size="6.5" fill="#000" text-anchor="middle" letter-spacing="0.4">0.6</text>
<text x="954.1" y="854" font-size="6.5" fill="#000" text-anchor="middle" letter-spacing="0.4">0.8</text>
<text x="986.9" y="854" font-size="6.5" fill="#000" text-anchor="middle" letter-spacing="0.4">1.0</text>
<text x="1019.6" y="854" font-size="6.5" fill="#000" text-anchor="middle" letter-spacing="0.4">1.2</text>
<text x="1052.3" y="854" font-size="6.5" fill="#000" text-anchor="middle" letter-spacing="0.4">1.4</text>
<text x="1085.0" y="854" font-size="6.5" fill="#000" text-anchor="middle" letter-spacing="0.4">1.6</text>
<text x="1117.7" y="854" font-size="6.5" fill="#000" text-anchor="middle" letter-spacing="0.4">1.8</text>
<text x="1150.4" y="854" font-size="6.5" fill="#000" text-anchor="middle" letter-spacing="0.4">2.0</text>
<text x="986.5" y="872.8" font-size="6.5" fill="#000" text-anchor="middle" textLength="80" lengthAdjust="spacing">Fundamentbreite b [m]</text>
<text transform="translate(779,585) rotate(-90)" font-size="6.5" fill="#1a1a1a" text-anchor="middle" textLength="184" lengthAdjust="spacing">Bemessungswert des Sohlwiderstands = σ<tspan font-size="4.5" dy="1.5">R,d</tspan><tspan dy="-1.5"> [kN/m²]</tspan></text>
</svg>
</body></html>
